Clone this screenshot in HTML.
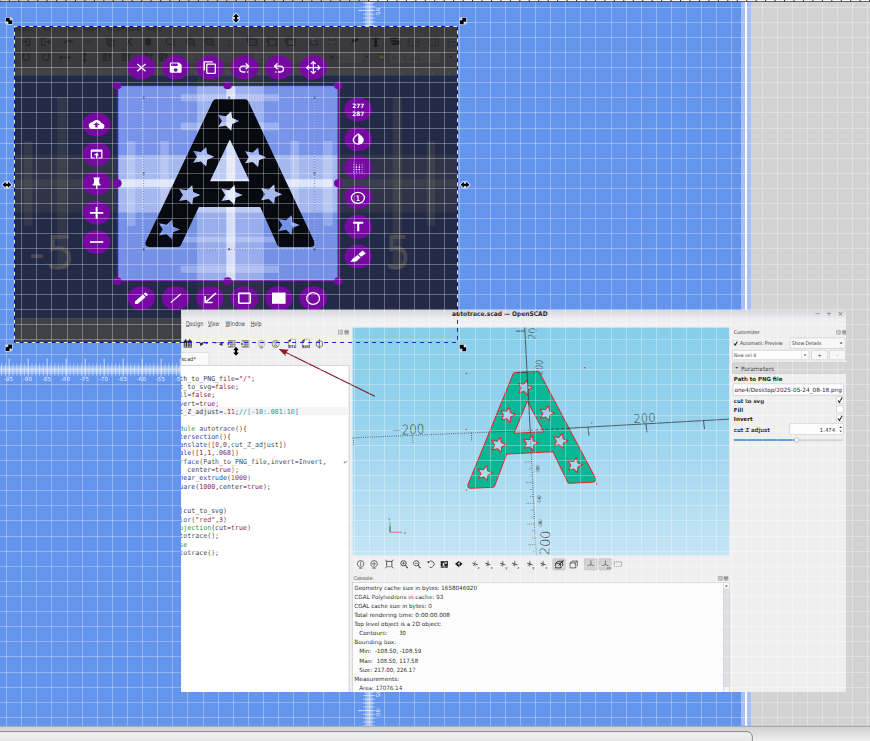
<!DOCTYPE html>
<html><head><meta charset="utf-8"><title>screenshot</title>
<style>
html,body{margin:0;padding:0;background:#6495ed;overflow:hidden}
svg{display:block}
text{white-space:pre}
</style></head><body>
<svg width="870" height="741" viewBox="0 0 870 741">
<rect x="0.00" y="0.00" width="870.00" height="741.00" fill="#6495ed" />
<rect x="751.00" y="0.00" width="119.00" height="726.00" fill="#d3d3d3" />
<rect x="741.00" y="0.00" width="10.00" height="726.00" fill="#a6c0f5" />
<rect x="745.00" y="0.00" width="2.00" height="726.00" fill="#ffffff" />
<g id="rulers">
<rect x="0.00" y="365.60" width="741.00" height="8.70" fill="#fff" fill-opacity="0.32"/>
<rect x="0.00" y="367.80" width="741.00" height="4.20" fill="#fff" fill-opacity="0.25"/>
<line x1="-2.20" y1="363.40" x2="-2.20" y2="376.00" stroke="#fff" stroke-width="0.8" stroke-opacity="0.5"/>
<line x1="1.60" y1="363.40" x2="1.60" y2="376.00" stroke="#fff" stroke-width="0.8" stroke-opacity="0.5"/>
<line x1="5.40" y1="363.40" x2="5.40" y2="376.00" stroke="#fff" stroke-width="0.8" stroke-opacity="0.5"/>
<line x1="9.20" y1="358.60" x2="9.20" y2="376.60" stroke="#fff" stroke-width="0.9" stroke-opacity="0.75"/>
<text x="8.40" y="381.40" font-size="5.6" fill="#fff" font-family="DejaVu Sans, sans-serif" text-anchor="middle" font-weight="normal" fill-opacity="0.85">-95</text>
<line x1="13.00" y1="363.40" x2="13.00" y2="376.00" stroke="#fff" stroke-width="0.8" stroke-opacity="0.5"/>
<line x1="16.80" y1="363.40" x2="16.80" y2="376.00" stroke="#fff" stroke-width="0.8" stroke-opacity="0.5"/>
<line x1="20.60" y1="363.40" x2="20.60" y2="376.00" stroke="#fff" stroke-width="0.8" stroke-opacity="0.5"/>
<line x1="24.40" y1="363.40" x2="24.40" y2="376.00" stroke="#fff" stroke-width="0.8" stroke-opacity="0.5"/>
<line x1="28.20" y1="358.60" x2="28.20" y2="376.60" stroke="#fff" stroke-width="0.9" stroke-opacity="0.75"/>
<text x="27.40" y="381.40" font-size="5.6" fill="#fff" font-family="DejaVu Sans, sans-serif" text-anchor="middle" font-weight="normal" fill-opacity="0.85">-90</text>
<line x1="32.00" y1="363.40" x2="32.00" y2="376.00" stroke="#fff" stroke-width="0.8" stroke-opacity="0.5"/>
<line x1="35.80" y1="363.40" x2="35.80" y2="376.00" stroke="#fff" stroke-width="0.8" stroke-opacity="0.5"/>
<line x1="39.60" y1="363.40" x2="39.60" y2="376.00" stroke="#fff" stroke-width="0.8" stroke-opacity="0.5"/>
<line x1="43.40" y1="363.40" x2="43.40" y2="376.00" stroke="#fff" stroke-width="0.8" stroke-opacity="0.5"/>
<line x1="47.20" y1="358.60" x2="47.20" y2="376.60" stroke="#fff" stroke-width="0.9" stroke-opacity="0.75"/>
<text x="46.40" y="381.40" font-size="5.6" fill="#fff" font-family="DejaVu Sans, sans-serif" text-anchor="middle" font-weight="normal" fill-opacity="0.85">-85</text>
<line x1="51.00" y1="363.40" x2="51.00" y2="376.00" stroke="#fff" stroke-width="0.8" stroke-opacity="0.5"/>
<line x1="54.80" y1="363.40" x2="54.80" y2="376.00" stroke="#fff" stroke-width="0.8" stroke-opacity="0.5"/>
<line x1="58.60" y1="363.40" x2="58.60" y2="376.00" stroke="#fff" stroke-width="0.8" stroke-opacity="0.5"/>
<line x1="62.40" y1="363.40" x2="62.40" y2="376.00" stroke="#fff" stroke-width="0.8" stroke-opacity="0.5"/>
<line x1="66.20" y1="358.60" x2="66.20" y2="376.60" stroke="#fff" stroke-width="0.9" stroke-opacity="0.75"/>
<text x="65.40" y="381.40" font-size="5.6" fill="#fff" font-family="DejaVu Sans, sans-serif" text-anchor="middle" font-weight="normal" fill-opacity="0.85">-80</text>
<line x1="70.00" y1="363.40" x2="70.00" y2="376.00" stroke="#fff" stroke-width="0.8" stroke-opacity="0.5"/>
<line x1="73.80" y1="363.40" x2="73.80" y2="376.00" stroke="#fff" stroke-width="0.8" stroke-opacity="0.5"/>
<line x1="77.60" y1="363.40" x2="77.60" y2="376.00" stroke="#fff" stroke-width="0.8" stroke-opacity="0.5"/>
<line x1="81.40" y1="363.40" x2="81.40" y2="376.00" stroke="#fff" stroke-width="0.8" stroke-opacity="0.5"/>
<line x1="85.20" y1="358.60" x2="85.20" y2="376.60" stroke="#fff" stroke-width="0.9" stroke-opacity="0.75"/>
<text x="84.40" y="381.40" font-size="5.6" fill="#fff" font-family="DejaVu Sans, sans-serif" text-anchor="middle" font-weight="normal" fill-opacity="0.85">-75</text>
<line x1="89.00" y1="363.40" x2="89.00" y2="376.00" stroke="#fff" stroke-width="0.8" stroke-opacity="0.5"/>
<line x1="92.80" y1="363.40" x2="92.80" y2="376.00" stroke="#fff" stroke-width="0.8" stroke-opacity="0.5"/>
<line x1="96.60" y1="363.40" x2="96.60" y2="376.00" stroke="#fff" stroke-width="0.8" stroke-opacity="0.5"/>
<line x1="100.40" y1="363.40" x2="100.40" y2="376.00" stroke="#fff" stroke-width="0.8" stroke-opacity="0.5"/>
<line x1="104.20" y1="358.60" x2="104.20" y2="376.60" stroke="#fff" stroke-width="0.9" stroke-opacity="0.75"/>
<text x="103.40" y="381.40" font-size="5.6" fill="#fff" font-family="DejaVu Sans, sans-serif" text-anchor="middle" font-weight="normal" fill-opacity="0.85">-70</text>
<line x1="108.00" y1="363.40" x2="108.00" y2="376.00" stroke="#fff" stroke-width="0.8" stroke-opacity="0.5"/>
<line x1="111.80" y1="363.40" x2="111.80" y2="376.00" stroke="#fff" stroke-width="0.8" stroke-opacity="0.5"/>
<line x1="115.60" y1="363.40" x2="115.60" y2="376.00" stroke="#fff" stroke-width="0.8" stroke-opacity="0.5"/>
<line x1="119.40" y1="363.40" x2="119.40" y2="376.00" stroke="#fff" stroke-width="0.8" stroke-opacity="0.5"/>
<line x1="123.20" y1="358.60" x2="123.20" y2="376.60" stroke="#fff" stroke-width="0.9" stroke-opacity="0.75"/>
<text x="122.40" y="381.40" font-size="5.6" fill="#fff" font-family="DejaVu Sans, sans-serif" text-anchor="middle" font-weight="normal" fill-opacity="0.85">-65</text>
<line x1="127.00" y1="363.40" x2="127.00" y2="376.00" stroke="#fff" stroke-width="0.8" stroke-opacity="0.5"/>
<line x1="130.80" y1="363.40" x2="130.80" y2="376.00" stroke="#fff" stroke-width="0.8" stroke-opacity="0.5"/>
<line x1="134.60" y1="363.40" x2="134.60" y2="376.00" stroke="#fff" stroke-width="0.8" stroke-opacity="0.5"/>
<line x1="138.40" y1="363.40" x2="138.40" y2="376.00" stroke="#fff" stroke-width="0.8" stroke-opacity="0.5"/>
<line x1="142.20" y1="358.60" x2="142.20" y2="376.60" stroke="#fff" stroke-width="0.9" stroke-opacity="0.75"/>
<text x="141.40" y="381.40" font-size="5.6" fill="#fff" font-family="DejaVu Sans, sans-serif" text-anchor="middle" font-weight="normal" fill-opacity="0.85">-60</text>
<line x1="146.00" y1="363.40" x2="146.00" y2="376.00" stroke="#fff" stroke-width="0.8" stroke-opacity="0.5"/>
<line x1="149.80" y1="363.40" x2="149.80" y2="376.00" stroke="#fff" stroke-width="0.8" stroke-opacity="0.5"/>
<line x1="153.60" y1="363.40" x2="153.60" y2="376.00" stroke="#fff" stroke-width="0.8" stroke-opacity="0.5"/>
<line x1="157.40" y1="363.40" x2="157.40" y2="376.00" stroke="#fff" stroke-width="0.8" stroke-opacity="0.5"/>
<line x1="161.20" y1="358.60" x2="161.20" y2="376.60" stroke="#fff" stroke-width="0.9" stroke-opacity="0.75"/>
<text x="160.40" y="381.40" font-size="5.6" fill="#fff" font-family="DejaVu Sans, sans-serif" text-anchor="middle" font-weight="normal" fill-opacity="0.85">-55</text>
<line x1="165.00" y1="363.40" x2="165.00" y2="376.00" stroke="#fff" stroke-width="0.8" stroke-opacity="0.5"/>
<line x1="168.80" y1="363.40" x2="168.80" y2="376.00" stroke="#fff" stroke-width="0.8" stroke-opacity="0.5"/>
<line x1="172.60" y1="363.40" x2="172.60" y2="376.00" stroke="#fff" stroke-width="0.8" stroke-opacity="0.5"/>
<line x1="176.40" y1="363.40" x2="176.40" y2="376.00" stroke="#fff" stroke-width="0.8" stroke-opacity="0.5"/>
<line x1="180.20" y1="358.60" x2="180.20" y2="376.60" stroke="#fff" stroke-width="0.9" stroke-opacity="0.75"/>
<text x="179.40" y="381.40" font-size="5.6" fill="#fff" font-family="DejaVu Sans, sans-serif" text-anchor="middle" font-weight="normal" fill-opacity="0.85">-50</text>
<line x1="184.00" y1="363.40" x2="184.00" y2="376.00" stroke="#fff" stroke-width="0.8" stroke-opacity="0.5"/>
<rect x="365.00" y="0.00" width="7.80" height="726.00" fill="#fff" fill-opacity="0.28"/>
<rect x="367.00" y="0.00" width="4.00" height="726.00" fill="#fff" fill-opacity="0.2"/>
<line x1="358.00" y1="729.58" x2="375.20" y2="729.58" stroke="#fff" stroke-width="0.9" stroke-opacity="0.75"/>
<text transform="translate(376.3,730.58) rotate(90)" font-size="5.6" fill="#fff" fill-opacity="0.85" text-anchor="middle" font-family="DejaVu Sans, sans-serif">-95</text>
<line x1="363.00" y1="725.79" x2="375.00" y2="725.79" stroke="#fff" stroke-width="0.8" stroke-opacity="0.6"/>
<line x1="363.00" y1="722.00" x2="375.00" y2="722.00" stroke="#fff" stroke-width="0.8" stroke-opacity="0.6"/>
<line x1="363.00" y1="718.22" x2="375.00" y2="718.22" stroke="#fff" stroke-width="0.8" stroke-opacity="0.6"/>
<line x1="363.00" y1="714.43" x2="375.00" y2="714.43" stroke="#fff" stroke-width="0.8" stroke-opacity="0.6"/>
<line x1="358.00" y1="710.65" x2="375.20" y2="710.65" stroke="#fff" stroke-width="0.9" stroke-opacity="0.75"/>
<text transform="translate(376.3,711.65) rotate(90)" font-size="5.6" fill="#fff" fill-opacity="0.85" text-anchor="middle" font-family="DejaVu Sans, sans-serif">-90</text>
<line x1="363.00" y1="706.87" x2="375.00" y2="706.87" stroke="#fff" stroke-width="0.8" stroke-opacity="0.6"/>
<line x1="363.00" y1="703.08" x2="375.00" y2="703.08" stroke="#fff" stroke-width="0.8" stroke-opacity="0.6"/>
<line x1="363.00" y1="699.30" x2="375.00" y2="699.30" stroke="#fff" stroke-width="0.8" stroke-opacity="0.6"/>
<line x1="363.00" y1="695.51" x2="375.00" y2="695.51" stroke="#fff" stroke-width="0.8" stroke-opacity="0.6"/>
<line x1="358.00" y1="691.73" x2="375.20" y2="691.73" stroke="#fff" stroke-width="0.9" stroke-opacity="0.75"/>
<text transform="translate(376.3,692.73) rotate(90)" font-size="5.6" fill="#fff" fill-opacity="0.85" text-anchor="middle" font-family="DejaVu Sans, sans-serif">-85</text>
<line x1="358.00" y1="29.35" x2="375.20" y2="29.35" stroke="#fff" stroke-width="0.9" stroke-opacity="0.75"/>
<text transform="translate(376.3,30.35) rotate(90)" font-size="5.6" fill="#fff" fill-opacity="0.85" text-anchor="middle" font-family="DejaVu Sans, sans-serif">90</text>
<line x1="363.00" y1="25.56" x2="375.00" y2="25.56" stroke="#fff" stroke-width="0.8" stroke-opacity="0.6"/>
<line x1="363.00" y1="21.78" x2="375.00" y2="21.78" stroke="#fff" stroke-width="0.8" stroke-opacity="0.6"/>
<line x1="363.00" y1="18.00" x2="375.00" y2="18.00" stroke="#fff" stroke-width="0.8" stroke-opacity="0.6"/>
<line x1="363.00" y1="14.21" x2="375.00" y2="14.21" stroke="#fff" stroke-width="0.8" stroke-opacity="0.6"/>
<line x1="358.00" y1="10.43" x2="375.20" y2="10.43" stroke="#fff" stroke-width="0.9" stroke-opacity="0.75"/>
<text transform="translate(376.3,11.43) rotate(90)" font-size="5.6" fill="#fff" fill-opacity="0.85" text-anchor="middle" font-family="DejaVu Sans, sans-serif">95</text>
<line x1="363.00" y1="6.64" x2="375.00" y2="6.64" stroke="#fff" stroke-width="0.8" stroke-opacity="0.6"/>
<line x1="363.00" y1="2.85" x2="375.00" y2="2.85" stroke="#fff" stroke-width="0.8" stroke-opacity="0.6"/>
<line x1="363.00" y1="-0.93" x2="375.00" y2="-0.93" stroke="#fff" stroke-width="0.8" stroke-opacity="0.6"/>
</g>
<clipPath id="cpDark"><rect x="15" y="27" width="442" height="315.5"/></clipPath>
<clipPath id="cpNavy"><rect x="15" y="75.2" width="442" height="242.8"/></clipPath>
<g id="dark" clip-path="url(#cpDark)">
<rect x="15.00" y="27.00" width="442.00" height="40.00" fill="#3a3a3e" />
<rect x="15.00" y="66.80" width="442.00" height="8.40" fill="#444448" />
<rect x="15.00" y="75.20" width="442.00" height="243.00" fill="#232a47" />
<rect x="15.00" y="318.00" width="442.00" height="25.00" fill="#404146" />
<rect x="15.00" y="318.00" width="442.00" height="0.80" fill="#4a4b50" />
<g opacity="0.92">
<text x="16.50" y="30.70" font-size="7.2" fill="#232327" font-family="DejaVu Sans, sans-serif" text-anchor="start" font-weight="normal" textLength="15.50" lengthAdjust="spacingAndGlyphs" >Object</text>
<text x="43.00" y="30.70" font-size="7.2" fill="#232327" font-family="DejaVu Sans, sans-serif" text-anchor="start" font-weight="normal" textLength="8.50" lengthAdjust="spacingAndGlyphs" >Path</text>
<text x="65.00" y="30.70" font-size="7.2" fill="#232327" font-family="DejaVu Sans, sans-serif" text-anchor="start" font-weight="normal" textLength="11.50" lengthAdjust="spacingAndGlyphs" >Text</text>
<text x="83.00" y="30.70" font-size="7.2" fill="#232327" font-family="DejaVu Sans, sans-serif" text-anchor="start" font-weight="normal" textLength="17.70" lengthAdjust="spacingAndGlyphs" >Filters</text>
<text x="106.50" y="30.70" font-size="7.2" fill="#232327" font-family="DejaVu Sans, sans-serif" text-anchor="start" font-weight="normal" textLength="33.50" lengthAdjust="spacingAndGlyphs" >Extensions</text>
<text x="147.00" y="30.70" font-size="7.2" fill="#232327" font-family="DejaVu Sans, sans-serif" text-anchor="start" font-weight="normal" textLength="15.00" lengthAdjust="spacingAndGlyphs" >Help</text>
<path d="M25.5,38.199999999999996 h4.2 v7.2 h-4.2 M22.0,41.8 h5 m-1.8,-1.8 l1.8,1.8 l-1.8,1.8" fill="none" stroke="#232327" stroke-width="1.1"/>
<path d="M46.2,38.199999999999996 h-4.6 v7.2 h4.6 M44.2,41.8 h6 m-1.8,-1.8 l1.8,1.8 l-1.8,1.8" fill="none" stroke="#232327" stroke-width="1.1"/>
<path d="M64.60000000000001,43.0 q3.4,-4.4 8,-0.6" fill="none" stroke="#232327" stroke-width="1.7"/>
<path d="M90.89999999999999,40.199999999999996 q-3.4,3.4 -7,0" fill="none" stroke="#303034" stroke-width="1.2"/>
<path d="M107.0,38.199999999999996 h5 v6 h-5z M109.2,40.199999999999996 h4.6 v6 h-4.6z" fill="none" stroke="#232327" stroke-width="1.1"/>
<path d="M126.4,38.0 l5.2,7.6 M131.6,38.0 l-5.2,7.6" fill="none" stroke="#232327" stroke-width="1.1"/>
<rect x="145.2" y="38.599999999999994" width="6" height="7" rx="0.8" fill="#232327"/><rect x="146.79999999999998" y="37.4" width="2.8" height="1.8" fill="#232327"/>
<ellipse cx="170.1" cy="41.199999999999996" rx="4" ry="3.4" fill="none" stroke="#232327" stroke-width="1.1"/><path d="M173.1,43.8 l2.4,2.2" fill="none" stroke="#232327" stroke-width="1.1"/>
<ellipse cx="190.1" cy="41.199999999999996" rx="4" ry="3.4" fill="none" stroke="#232327" stroke-width="1.1"/><rect x="188.29999999999998" y="39.4" width="3.8" height="3.4" fill="#34343a" stroke="#232327" stroke-width="0.6"/><path d="M193.1,43.8 l2.4,2.2" fill="none" stroke="#232327" stroke-width="1.1"/>
<ellipse cx="209.20000000000002" cy="41.199999999999996" rx="4" ry="3.4" fill="none" stroke="#232327" stroke-width="1.1"/><rect x="207.4" y="39.4" width="3.8" height="3.4" fill="#34343a" stroke="#232327" stroke-width="0.6"/><path d="M212.20000000000002,43.8 l2.4,2.2" fill="none" stroke="#232327" stroke-width="1.1"/>
<path d="M229,37.4 v8.6 M227.5,46.0 h7" fill="none" stroke="#232327" stroke-width="0.8" stroke-dasharray="1.4 1"/>
<rect x="248.70000000000002" y="38.8" width="7.6" height="6.6" fill="#34353d" stroke="#232327" stroke-width="1"/><path d="M247.3,42.8 v-5.6 h6" fill="none" stroke="#232327" stroke-width="1.1"/>
<rect x="268.7" y="38.8" width="7.6" height="6.6" fill="none" stroke="#232327" stroke-width="1"/><rect x="270.7" y="41.4" width="3.6" height="2.6" fill="#4a4430"/><path d="M267.3,42.8 v-5.6 h6" fill="none" stroke="#232327" stroke-width="1.1"/>
<rect x="287.09999999999997" y="38.8" width="7.6" height="6.6" fill="none" stroke="#232327" stroke-width="1"/><rect x="289.09999999999997" y="41.4" width="3.6" height="2.6" fill="#4a4430"/><path d="M285.7,42.8 v-5.6 h6" fill="none" stroke="#232327" stroke-width="1.1"/>
<path d="M309.59999999999997,44.8 l2,-5 h4 l2,5z" fill="#3a3d48" stroke="#232327" stroke-width="0.9"/><rect x="311.2" y="37.599999999999994" width="3.6" height="2.6" fill="#454a58"/>
<path d="M328.5,38.199999999999996 l8,7.2 M336.5,38.199999999999996 l-8,7.2" fill="none" stroke="#232327" stroke-width="0.9"/><rect x="329.9" y="41.199999999999996" width="5.2" height="2.2" fill="#4a4636"/>
<path d="M350.20000000000005,45.599999999999994 l2.6,-6.8 l1.8,0.8z" fill="#232327"/><path d="M353.0,40.4 l5.2,-3 l1.2,1.6 l-5,3.4z" fill="#16161a"/><circle cx="359.0" cy="38.4" r="0.9" fill="#5a4a20"/>
<path d="M371.9,37.4 h7.6 v2 h-0.6 l-0.6,-1 h-1.4 v7 l1.4,0.6 v0.6 h-5.2 v-0.6 l1.4,-0.6 v-7 h-1.4 l-0.6,1 h-0.6z" fill="#141417"/>
<path d="M390.5,38.4 l7.4,-0.6 M391.70000000000005,41.199999999999996 l7.6,0.2 M392.5,44.199999999999996 l7,-0.8" fill="none" stroke="#131316" stroke-width="1.7" stroke-linecap="round"/>
<rect x="408.4" y="37.8" width="10.4" height="8" rx="1" fill="none" stroke="#2a2a2e" stroke-width="1"/><path d="M411.79999999999995,40.0 l-2,1.8 l2,1.8 M415.2,40.0 l2,1.8 l-2,1.8" fill="none" stroke="#2c2c31" stroke-width="0.9"/>
<rect x="429.09999999999997" y="37.8" width="9.4" height="8" rx="1" fill="none" stroke="#2a2a2e" stroke-width="1"/><path d="M435.3,37.8 v8" stroke="#2a2a2e" stroke-width="0.9"/>
<path d="M448.5,39.199999999999996 h9 v2.2 h-9z M448.5,42.8 h9 v2.4 h-9z" fill="#40454f" stroke="#2a2a2e" stroke-width="0.7"/>
<path d="M23.9,54.9 A3.3,3.1 0 1 0 26.9,54.099999999999994" fill="none" stroke="#232327" stroke-width="1.1"/><path d="M22.3,55.9 l0.4,-3 l2.6,1.8z" fill="#232327"/>
<path d="M48.300000000000004,54.9 A3.3,3.1 0 1 1 45.300000000000004,54.099999999999994" fill="none" stroke="#232327" stroke-width="1.1"/><path d="M49.900000000000006,55.9 l-0.4,-3 l-2.6,1.8z" fill="#232327"/>
<path d="M59.8,57.3 h10 M61.8,55.4 l-2.2,1.9 l2.2,1.9 M67.8,55.4 l2.2,1.9 l-2.2,1.9" fill="none" stroke="#232327" stroke-width="1.1"/>
<path d="M84.8,53.099999999999994 v8.4 M83.0,54.9 l1.8,-2 l1.8,2 M83.0,59.699999999999996 l1.8,2 l1.8,-2" fill="none" stroke="#232327" stroke-width="1.1"/>
<path d="M102.5,53.699999999999996 h5 M102.5,55.9 h5 M102.5,58.099999999999994 h5 M102.5,60.3 h5" fill="none" stroke="#232327" stroke-width="1.3"/><path d="M109.7,60.9 v-7 m-1.4,1.6 l1.4,-1.6 l1.4,1.6" fill="none" stroke="#232327" stroke-width="1.1"/>
<path d="M121.7,53.699999999999996 h5 M121.7,55.9 h5 M121.7,58.099999999999994 h5 M121.7,60.3 h5" fill="none" stroke="#232327" stroke-width="1.3"/><path d="M128.9,60.9 v-7 m-1.4,1.6 l1.4,-1.6 l1.4,1.6" fill="none" stroke="#232327" stroke-width="1.1"/>
<path d="M144,53.699999999999996 h5 M144,55.9 h5 M144,58.099999999999994 h5 M144,60.3 h5" fill="none" stroke="#232327" stroke-width="1.3"/><path d="M151.2,60.9 v-7 m-1.4,1.6 l1.4,-1.6 l1.4,1.6" fill="none" stroke="#232327" stroke-width="1.1"/>
<path d="M159,53.699999999999996 h5 M159,55.9 h5 M159,58.099999999999994 h5 M159,60.3 h5" fill="none" stroke="#232327" stroke-width="1.3"/><path d="M166.2,60.9 v-7 m-1.4,1.6 l1.4,-1.6 l1.4,1.6" fill="none" stroke="#232327" stroke-width="1.1"/>
<rect x="186.00" y="51.60" width="46.00" height="11.40" fill="#424246" />
<rect x="254.00" y="51.60" width="68.00" height="11.40" fill="#424246" />
<rect x="337.00" y="51.60" width="25.00" height="11.40" fill="#424246" />
<rect x="390.00" y="51.60" width="50.00" height="11.40" fill="#424246" />
<text x="194.00" y="60.20" font-size="6.2" fill="#2b2b30" font-family="DejaVu Sans, sans-serif" text-anchor="start" font-weight="normal" >2.5</text>
<text x="261.00" y="60.20" font-size="6.2" fill="#2b2b30" font-family="DejaVu Sans, sans-serif" text-anchor="start" font-weight="normal" >2.219</text>
<text x="329.00" y="60.20" font-size="6.2" fill="#2b2b30" font-family="DejaVu Sans, sans-serif" text-anchor="start" font-weight="normal" >004</text>
<text x="392.00" y="60.20" font-size="6.2" fill="#2b2b30" font-family="DejaVu Sans, sans-serif" text-anchor="start" font-weight="normal" >H:</text>
<text x="403.00" y="60.20" font-size="6.2" fill="#2b2b30" font-family="DejaVu Sans, sans-serif" text-anchor="start" font-weight="normal" >5.182</text>
<circle cx="236" cy="56.6" r="0.9" fill="#6a2424"/>
<circle cx="326" cy="56.6" r="0.9" fill="#6a2424"/>
<circle cx="360.2" cy="56.6" r="0.9" fill="#6a2424"/>
<circle cx="444.7" cy="56.6" r="0.9" fill="#6a2424"/>
<path d="M242,55.2 l1.2,1.4 l-1.2,1.4 l-1.2,-1.4z" fill="#1c1c20"/>
<path d="M332,55.2 l1.2,1.4 l-1.2,1.4 l-1.2,-1.4z" fill="#1c1c20"/>
<path d="M366.5,55.2 l1.2,1.4 l-1.2,1.4 l-1.2,-1.4z" fill="#1c1c20"/>
<path d="M450.5,55.2 l1.2,1.4 l-1.2,1.4 l-1.2,-1.4z" fill="#1c1c20"/>
<rect x="378.5" y="54.6" width="5.6" height="4.6" fill="#5a5230" stroke="#26262a" stroke-width="0.7" transform="rotate(12 381 57)"/>
<line x1="22.00" y1="70.50" x2="22.00" y2="75.00" stroke="#5a5a5e" stroke-width="0.7" />
<line x1="37.80" y1="70.50" x2="37.80" y2="75.00" stroke="#5a5a5e" stroke-width="0.7" />
<line x1="53.60" y1="70.50" x2="53.60" y2="75.00" stroke="#5a5a5e" stroke-width="0.7" />
<line x1="69.40" y1="70.50" x2="69.40" y2="75.00" stroke="#5a5a5e" stroke-width="0.7" />
<line x1="85.20" y1="70.50" x2="85.20" y2="75.00" stroke="#5a5a5e" stroke-width="0.7" />
<line x1="101.00" y1="70.50" x2="101.00" y2="75.00" stroke="#5a5a5e" stroke-width="0.7" />
<line x1="116.80" y1="70.50" x2="116.80" y2="75.00" stroke="#5a5a5e" stroke-width="0.7" />
<line x1="132.60" y1="70.50" x2="132.60" y2="75.00" stroke="#5a5a5e" stroke-width="0.7" />
<line x1="148.40" y1="70.50" x2="148.40" y2="75.00" stroke="#5a5a5e" stroke-width="0.7" />
<line x1="164.20" y1="70.50" x2="164.20" y2="75.00" stroke="#5a5a5e" stroke-width="0.7" />
<line x1="180.00" y1="70.50" x2="180.00" y2="75.00" stroke="#5a5a5e" stroke-width="0.7" />
<line x1="195.80" y1="70.50" x2="195.80" y2="75.00" stroke="#5a5a5e" stroke-width="0.7" />
<line x1="211.60" y1="70.50" x2="211.60" y2="75.00" stroke="#5a5a5e" stroke-width="0.7" />
<line x1="227.40" y1="70.50" x2="227.40" y2="75.00" stroke="#5a5a5e" stroke-width="0.7" />
<line x1="243.20" y1="70.50" x2="243.20" y2="75.00" stroke="#5a5a5e" stroke-width="0.7" />
<line x1="259.00" y1="70.50" x2="259.00" y2="75.00" stroke="#5a5a5e" stroke-width="0.7" />
<line x1="274.80" y1="70.50" x2="274.80" y2="75.00" stroke="#5a5a5e" stroke-width="0.7" />
<line x1="290.60" y1="70.50" x2="290.60" y2="75.00" stroke="#5a5a5e" stroke-width="0.7" />
<line x1="306.40" y1="70.50" x2="306.40" y2="75.00" stroke="#5a5a5e" stroke-width="0.7" />
<line x1="322.20" y1="70.50" x2="322.20" y2="75.00" stroke="#5a5a5e" stroke-width="0.7" />
<line x1="338.00" y1="70.50" x2="338.00" y2="75.00" stroke="#5a5a5e" stroke-width="0.7" />
<line x1="353.80" y1="70.50" x2="353.80" y2="75.00" stroke="#5a5a5e" stroke-width="0.7" />
<line x1="369.60" y1="70.50" x2="369.60" y2="75.00" stroke="#5a5a5e" stroke-width="0.7" />
<line x1="385.40" y1="70.50" x2="385.40" y2="75.00" stroke="#5a5a5e" stroke-width="0.7" />
<line x1="401.20" y1="70.50" x2="401.20" y2="75.00" stroke="#5a5a5e" stroke-width="0.7" />
<line x1="417.00" y1="70.50" x2="417.00" y2="75.00" stroke="#5a5a5e" stroke-width="0.7" />
<line x1="432.80" y1="70.50" x2="432.80" y2="75.00" stroke="#5a5a5e" stroke-width="0.7" />
<line x1="448.60" y1="70.50" x2="448.60" y2="75.00" stroke="#5a5a5e" stroke-width="0.7" />
<line x1="464.40" y1="70.50" x2="464.40" y2="75.00" stroke="#5a5a5e" stroke-width="0.7" />
<line x1="480.20" y1="70.50" x2="480.20" y2="75.00" stroke="#5a5a5e" stroke-width="0.7" />
</g>
<g clip-path="url(#cpNavy)">
<rect x="15.00" y="155.00" width="442.00" height="57.50" fill="#978557" fill-opacity="0.12"/>
<rect x="15.00" y="179.20" width="442.00" height="8.00" fill="#a8a080" fill-opacity="0.10"/>
<rect x="197.00" y="75.00" width="66.00" height="243.00" fill="#978557" fill-opacity="0.08"/>
<rect x="23.80" y="141.00" width="8.50" height="85.00" fill="#9a8d67" fill-opacity="0.15"/>
<rect x="57.10" y="97.30" width="9.20" height="172.00" fill="#9a8d67" fill-opacity="0.15"/>
<rect x="392.70" y="97.30" width="9.20" height="172.00" fill="#9a8d67" fill-opacity="0.15"/>
<rect x="426.70" y="141.00" width="8.50" height="85.00" fill="#9a8d67" fill-opacity="0.15"/>
</g>
<text x="28.60" y="268.50" font-size="47" fill="#6b6660" font-family="DejaVu Sans, sans-serif" text-anchor="start" font-weight="normal" textLength="46.50" lengthAdjust="spacingAndGlyphs" fill-opacity="0.5">-5</text>
<text x="385.00" y="268.50" font-size="47" fill="#6b6660" font-family="DejaVu Sans, sans-serif" text-anchor="start" font-weight="normal" textLength="26.00" lengthAdjust="spacingAndGlyphs" fill-opacity="0.5">5</text>
</g>
<clipPath id="cpPanel"><rect x="117.70" y="85.60" width="220.40" height="195.30"/></clipPath>
<g id="panel">
<rect x="117.70" y="85.60" width="220.40" height="195.30" fill="#7894e8" />
<g clip-path="url(#cpPanel)">
<rect x="197.00" y="85.60" width="66.00" height="195.30" fill="#fff" fill-opacity="0.28"/>
<rect x="117.70" y="155.10" width="220.40" height="57.50" fill="#fff" fill-opacity="0.33"/>
<rect x="117.70" y="212.60" width="220.40" height="68.30" fill="#2040c0" fill-opacity="0.03"/>
<rect x="126.90" y="141.00" width="8.50" height="85.00" fill="#fff" fill-opacity="0.22"/>
<rect x="160.20" y="141.00" width="8.50" height="85.00" fill="#fff" fill-opacity="0.22"/>
<rect x="290.50" y="141.00" width="8.50" height="85.00" fill="#fff" fill-opacity="0.22"/>
<rect x="324.00" y="141.00" width="8.50" height="85.00" fill="#fff" fill-opacity="0.22"/>
<rect x="180.70" y="94.20" width="98.00" height="7.10" fill="#fff" fill-opacity="0.25"/>
<rect x="180.70" y="122.50" width="98.00" height="7.80" fill="#fff" fill-opacity="0.25"/>
<rect x="180.70" y="236.70" width="98.00" height="5.60" fill="#fff" fill-opacity="0.25"/>
<rect x="180.70" y="265.70" width="98.00" height="7.10" fill="#fff" fill-opacity="0.25"/>
<rect x="120.50" y="179.20" width="212.00" height="8.00" fill="#fff" fill-opacity="0.62"/>
<rect x="226.30" y="85.60" width="9.00" height="195.30" fill="#fff" fill-opacity="0.60"/>
</g>
<path d="M212.75,101.29Q213.70,99.30 215.91,99.30L245.08,99.30Q247.30,99.30 248.25,101.31L313.78,240.58Q316.80,247.00 309.71,247.00L280.14,247.00Q278.20,247.00 277.40,245.23L260.36,207.35Q260.20,207.00 259.81,207.00L199.28,207.00Q198.90,207.00 198.74,207.34L180.81,245.28Q180.00,247.00 178.10,247.00L150.33,247.00Q143.20,247.00 146.27,240.56ZM229.35,140.35Q229.80,139.40 230.25,140.35L249.26,180.49Q249.60,181.20 248.81,181.20L210.79,181.20Q210.00,181.20 210.34,180.49ZM231.22,111.21L232.21,118.05L239.30,121.00L232.21,123.95L231.22,130.79L225.84,125.77L218.13,127.05L221.90,121.00L218.13,114.95L225.84,116.23ZM206.22,146.91L207.21,153.75L214.30,156.70L207.21,159.65L206.22,166.49L200.84,161.47L193.13,162.75L196.90,156.70L193.13,150.65L200.84,151.93ZM258.12,147.41L259.11,154.25L266.20,157.20L259.11,160.15L258.12,166.99L252.74,161.97L245.03,163.25L248.80,157.20L245.03,151.15L252.74,152.43ZM192.22,185.21L193.21,192.05L200.30,195.00L193.21,197.95L192.22,204.79L186.84,199.77L179.13,201.05L182.90,195.00L179.13,188.95L186.84,190.23ZM234.52,185.11L235.51,191.95L242.60,194.90L235.51,197.85L234.52,204.69L229.14,199.67L221.43,200.95L225.20,194.90L221.43,188.85L229.14,190.13ZM274.12,184.41L275.11,191.25L282.20,194.20L275.11,197.15L274.12,203.99L268.74,198.97L261.03,200.25L264.80,194.20L261.03,188.15L268.74,189.43ZM172.02,219.61L173.01,226.45L180.10,229.40L173.01,232.35L172.02,239.19L166.64,234.17L158.93,235.45L162.70,229.40L158.93,223.35L166.64,224.63ZM291.52,215.31L292.51,222.15L299.60,225.10L292.51,228.05L291.52,234.89L286.14,229.87L278.43,231.15L282.20,225.10L278.43,219.05L286.14,220.33Z" fill="#080a12" fill-rule="evenodd"/>
<rect x="143.6" y="97.6" width="171" height="151.6" fill="none" stroke="#fff" stroke-width="0.9" stroke-opacity="0.35"/>
<rect x="143.6" y="97.6" width="171" height="151.6" fill="none" stroke="#4454d8" stroke-width="0.9" stroke-dasharray="1 1.7" stroke-opacity="0.85"/>
<rect x="142.60" y="96.60" width="2.00" height="2.00" fill="#333" fill-opacity="0.8"/>
<rect x="228.10" y="96.60" width="2.00" height="2.00" fill="#333" fill-opacity="0.8"/>
<rect x="313.60" y="96.60" width="2.00" height="2.00" fill="#333" fill-opacity="0.8"/>
<rect x="142.60" y="172.40" width="2.00" height="2.00" fill="#333" fill-opacity="0.8"/>
<rect x="313.60" y="172.40" width="2.00" height="2.00" fill="#333" fill-opacity="0.8"/>
<rect x="142.60" y="248.20" width="2.00" height="2.00" fill="#333" fill-opacity="0.8"/>
<rect x="228.10" y="248.20" width="2.00" height="2.00" fill="#333" fill-opacity="0.8"/>
<rect x="313.60" y="248.20" width="2.00" height="2.00" fill="#333" fill-opacity="0.8"/>
<rect x="117.7" y="85.6" width="220.40" height="195.30" fill="none" stroke="#7609a2" stroke-width="1.1"/>
<ellipse cx="117.30" cy="85.30" rx="4.3" ry="3.9" fill="#7609a2"/>
<ellipse cx="117.30" cy="183.20" rx="4.3" ry="3.9" fill="#7609a2"/>
<ellipse cx="117.30" cy="281.10" rx="4.3" ry="3.9" fill="#7609a2"/>
<ellipse cx="227.60" cy="85.30" rx="4.3" ry="3.9" fill="#7609a2"/>
<ellipse cx="227.60" cy="281.10" rx="4.3" ry="3.9" fill="#7609a2"/>
<ellipse cx="338.30" cy="85.30" rx="4.3" ry="3.9" fill="#7609a2"/>
<ellipse cx="338.30" cy="183.20" rx="4.3" ry="3.9" fill="#7609a2"/>
<ellipse cx="338.30" cy="281.10" rx="4.3" ry="3.9" fill="#7609a2"/>
</g>
<g id="buttons">
<ellipse cx="141.40" cy="67.60" rx="13.8" ry="12.0" fill="#7609a2"/>
<path transform="translate(133.54,60.70) scale(0.655,0.575)" d="M19 6.41L17.59 5 12 10.59 6.41 5 5 6.41 10.59 12 5 17.59 6.41 19 12 13.41 17.59 19 19 17.59 13.41 12z" fill="#fff"/>
<ellipse cx="175.70" cy="67.60" rx="13.8" ry="12.0" fill="#7609a2"/>
<path transform="translate(167.84,60.70) scale(0.655,0.575)" d="M17 3H5c-1.11 0-2 .9-2 2v14c0 1.1.89 2 2 2h14c1.1 0 2-.9 2-2V7l-4-4zm-5 16c-1.66 0-3-1.34-3-3s1.34-3 3-3 3 1.34 3 3-1.34 3-3 3zm3-10H5V5h10v4z" fill="#fff"/>
<ellipse cx="210.10" cy="67.60" rx="13.8" ry="12.0" fill="#7609a2"/>
<path transform="translate(202.24,60.70) scale(0.655,0.575)" d="M16 1H4c-1.1 0-2 .9-2 2v14h2V3h12V1zm3 4H8c-1.1 0-2 .9-2 2v14c0 1.1.9 2 2 2h11c1.1 0 2-.9 2-2V7c0-1.1-.9-2-2-2zm0 16H8V7h11v14z" fill="#fff"/>
<ellipse cx="244.50" cy="67.60" rx="13.8" ry="12.0" fill="#7609a2"/>
<ellipse cx="278.80" cy="67.60" rx="13.8" ry="12.0" fill="#7609a2"/>
<ellipse cx="313.30" cy="67.60" rx="13.8" ry="12.0" fill="#7609a2"/>
<g transform="translate(313.30,67.60)" fill="none" stroke="#fff" stroke-width="1.15" stroke-linecap="round" stroke-linejoin="round"><path d="M-6.6,0 H6.6 M0,-5.7 V5.7"/><path d="M-4.6,-1.9 L-6.7,0 L-4.6,1.9 M4.6,-1.9 L6.7,0 L4.6,1.9 M-2.1,-3.9 L0,-5.8 L2.1,-3.9 M-2.1,3.9 L0,5.8 L2.1,3.9"/></g>
<g transform="translate(244.50,67.60) scale(1,1)" fill="none" stroke="#fff" stroke-width="1.3" stroke-linecap="round" stroke-linejoin="round"><path d="M3.6,-1.4 H-1.6 A3.1,2.9 0 0 0 -1.6,4.4 H0.4"/><path d="M1.6,-3.9 L4.2,-1.4 L1.6,1.1"/><path d="M3.0,4.4 h0.1" stroke-width="1.5"/></g>
<g transform="translate(278.80,67.60) scale(-1,1)" fill="none" stroke="#fff" stroke-width="1.3" stroke-linecap="round" stroke-linejoin="round"><path d="M3.6,-1.4 H-1.6 A3.1,2.9 0 0 0 -1.6,4.4 H0.4"/><path d="M1.6,-3.9 L4.2,-1.4 L1.6,1.1"/><path d="M3.0,4.4 h0.1" stroke-width="1.5"/></g>
<ellipse cx="96.60" cy="124.50" rx="13.8" ry="12.0" fill="#7609a2"/>
<path transform="translate(88.74,117.60) scale(0.655,0.575)" d="M19.35 10.04C18.67 6.59 15.64 4 12 4 9.11 4 6.6 5.64 5.35 8.04 2.34 8.36 0 10.91 0 14c0 3.31 2.69 6 6 6h13c2.76 0 5-2.24 5-5 0-2.64-2.05-4.78-4.65-4.96zM14 13v4h-4v-4H7l5-5 5 5h-3z" fill="#fff"/>
<ellipse cx="96.60" cy="154.00" rx="13.8" ry="12.0" fill="#7609a2"/>
<path transform="translate(88.74,147.10) scale(0.655,0.575)" d="M19 4H5c-1.11 0-2 .9-2 2v12c0 1.1.89 2 2 2h4v-2H5V8h14v10h-4v2h4c1.1 0 2-.9 2-2V6c0-1.1-.89-2-2-2zm-7 6l-4 4h3v6h2v-6h3l-4-4z" fill="#fff"/>
<ellipse cx="96.60" cy="183.20" rx="13.8" ry="12.0" fill="#7609a2"/>
<path transform="translate(88.74,176.30) scale(0.655,0.575)" d="M16,12V4H17V2H7V4H8V12L6,14V16H11.2V22H12.8V16H18V14L16,12Z" fill="#fff"/>
<ellipse cx="96.60" cy="212.80" rx="13.8" ry="12.0" fill="#7609a2"/>
<path transform="translate(85.20,202.80) scale(0.950,0.834)" d="M19 13h-6v6h-2v-6H5v-2h6V5h2v6h6v2z" fill="#fff"/>
<ellipse cx="96.60" cy="242.00" rx="13.8" ry="12.0" fill="#7609a2"/>
<path transform="translate(85.20,232.00) scale(0.950,0.834)" d="M19 13H5v-2h14v2z" fill="#fff"/>
<ellipse cx="358.20" cy="109.40" rx="13.8" ry="12.0" fill="#7609a2"/>
<text x="358.20" y="108.10" font-size="6.0" fill="#fff" font-family="DejaVu Sans, sans-serif" text-anchor="middle" font-weight="bold" textLength="12.00" lengthAdjust="spacingAndGlyphs" >277</text><text x="358.20" y="116.30" font-size="6.0" fill="#fff" font-family="DejaVu Sans, sans-serif" text-anchor="middle" font-weight="bold" textLength="12.00" lengthAdjust="spacingAndGlyphs" >287</text>
<ellipse cx="358.20" cy="138.90" rx="13.8" ry="12.0" fill="#7609a2"/>
<path transform="translate(349.79,131.52) scale(0.701,0.615)" d="M17.66 7.93L12 2.27 6.34 7.93c-3.12 3.12-3.12 8.19 0 11.31C7.9 20.8 9.95 21.58 12 21.58c2.05 0 4.1-.78 5.66-2.34 3.12-3.12 3.12-8.19 0-11.31zM12 19.59c-1.6 0-3.11-.62-4.24-1.76C6.62 16.69 6 15.19 6 13.59s.62-3.11 1.76-4.24L12 5.1v14.49z" fill="#fff"/>
<ellipse cx="358.20" cy="167.60" rx="13.8" ry="12.0" fill="#7609a2"/>
<ellipse cx="350.90" cy="162.30" rx="0.35" ry="0.32" fill="#fff" fill-opacity="0.5"/><ellipse cx="350.90" cy="164.70" rx="0.35" ry="0.32" fill="#fff" fill-opacity="0.5"/><ellipse cx="350.90" cy="167.10" rx="0.35" ry="0.32" fill="#fff" fill-opacity="0.5"/><ellipse cx="350.90" cy="169.50" rx="0.35" ry="0.32" fill="#fff" fill-opacity="0.5"/><ellipse cx="350.90" cy="171.90" rx="0.35" ry="0.32" fill="#fff" fill-opacity="0.5"/><ellipse cx="350.90" cy="174.30" rx="0.35" ry="0.32" fill="#fff" fill-opacity="0.5"/><ellipse cx="353.70" cy="162.30" rx="0.35" ry="0.32" fill="#fff" fill-opacity="0.5"/><ellipse cx="353.70" cy="164.70" rx="0.61" ry="0.55" fill="#fff" fill-opacity="0.85"/><ellipse cx="353.70" cy="167.10" rx="0.61" ry="0.55" fill="#fff" fill-opacity="0.85"/><ellipse cx="353.70" cy="169.50" rx="0.61" ry="0.55" fill="#fff" fill-opacity="0.85"/><ellipse cx="353.70" cy="171.90" rx="0.61" ry="0.55" fill="#fff" fill-opacity="0.85"/><ellipse cx="353.70" cy="174.30" rx="0.35" ry="0.32" fill="#fff" fill-opacity="0.5"/><ellipse cx="356.50" cy="162.30" rx="0.35" ry="0.32" fill="#fff" fill-opacity="0.5"/><ellipse cx="356.50" cy="164.70" rx="0.61" ry="0.55" fill="#fff" fill-opacity="0.85"/><ellipse cx="356.50" cy="167.10" rx="0.86" ry="0.78" fill="#fff" fill-opacity="1.0"/><ellipse cx="356.50" cy="169.50" rx="0.86" ry="0.78" fill="#fff" fill-opacity="1.0"/><ellipse cx="356.50" cy="171.90" rx="0.61" ry="0.55" fill="#fff" fill-opacity="0.85"/><ellipse cx="356.50" cy="174.30" rx="0.35" ry="0.32" fill="#fff" fill-opacity="0.5"/><ellipse cx="359.30" cy="162.30" rx="0.35" ry="0.32" fill="#fff" fill-opacity="0.5"/><ellipse cx="359.30" cy="164.70" rx="0.61" ry="0.55" fill="#fff" fill-opacity="0.85"/><ellipse cx="359.30" cy="167.10" rx="0.86" ry="0.78" fill="#fff" fill-opacity="1.0"/><ellipse cx="359.30" cy="169.50" rx="0.86" ry="0.78" fill="#fff" fill-opacity="1.0"/><ellipse cx="359.30" cy="171.90" rx="0.61" ry="0.55" fill="#fff" fill-opacity="0.85"/><ellipse cx="359.30" cy="174.30" rx="0.35" ry="0.32" fill="#fff" fill-opacity="0.5"/><ellipse cx="362.10" cy="162.30" rx="0.35" ry="0.32" fill="#fff" fill-opacity="0.5"/><ellipse cx="362.10" cy="164.70" rx="0.61" ry="0.55" fill="#fff" fill-opacity="0.85"/><ellipse cx="362.10" cy="167.10" rx="0.61" ry="0.55" fill="#fff" fill-opacity="0.85"/><ellipse cx="362.10" cy="169.50" rx="0.61" ry="0.55" fill="#fff" fill-opacity="0.85"/><ellipse cx="362.10" cy="171.90" rx="0.61" ry="0.55" fill="#fff" fill-opacity="0.85"/><ellipse cx="362.10" cy="174.30" rx="0.35" ry="0.32" fill="#fff" fill-opacity="0.5"/><ellipse cx="364.90" cy="162.30" rx="0.35" ry="0.32" fill="#fff" fill-opacity="0.5"/><ellipse cx="364.90" cy="164.70" rx="0.35" ry="0.32" fill="#fff" fill-opacity="0.5"/><ellipse cx="364.90" cy="167.10" rx="0.35" ry="0.32" fill="#fff" fill-opacity="0.5"/><ellipse cx="364.90" cy="169.50" rx="0.35" ry="0.32" fill="#fff" fill-opacity="0.5"/><ellipse cx="364.90" cy="171.90" rx="0.35" ry="0.32" fill="#fff" fill-opacity="0.5"/><ellipse cx="364.90" cy="174.30" rx="0.35" ry="0.32" fill="#fff" fill-opacity="0.5"/>
<ellipse cx="358.20" cy="197.00" rx="13.8" ry="12.0" fill="#7609a2"/>
<ellipse cx="357.90" cy="197.90" rx="6.5" ry="5.5" fill="none" stroke="#fff" stroke-width="1.3"/><text x="357.80" y="200.60" font-size="7.6" fill="#fff" font-family="DejaVu Sans, sans-serif" text-anchor="middle" font-weight="bold" textLength="3.80" lengthAdjust="spacingAndGlyphs" >1</text>
<ellipse cx="358.20" cy="226.80" rx="13.8" ry="12.0" fill="#7609a2"/>
<path transform="translate(349.55,219.21) scale(0.721,0.632)" d="M5 4v3h5.5v12h3V7H19V4z" fill="#fff"/>
<ellipse cx="358.20" cy="256.40" rx="13.8" ry="12.0" fill="#7609a2"/>
<g transform="translate(358.20,256.40)" fill="#fff"><path d="M4.5,-5.9 L7.6,-3.0 L3.1,0.4 L0,-2.1Z"/><path d="M-0.6,-1.4 L2.4,1.1 L-2.1,5.0 L-7.7,5.6 L-5.5,2.3Z"/></g>
<ellipse cx="141.40" cy="298.20" rx="13.8" ry="12.0" fill="#7609a2"/>
<path transform="translate(132.75,290.61) scale(0.721,0.632)" d="M3 17.25V21h3.75L17.81 9.94l-3.75-3.75L3 17.25zM20.71 7.04c.39-.39.39-1.02 0-1.41l-2.34-2.34c-.39-.39-1.02-.39-1.41 0l-1.83 1.83 3.75 3.75 1.83-1.83z" fill="#fff"/>
<ellipse cx="175.70" cy="298.20" rx="13.8" ry="12.0" fill="#7609a2"/>
<path transform="translate(167.45,290.95) scale(0.688,0.604)" d="M4.2 18.6L18.8 4.4l1.2 1.3L5.4 19.9z" fill="#fff"/>
<ellipse cx="210.10" cy="298.20" rx="13.8" ry="12.0" fill="#7609a2"/>
<path transform="translate(200.28,289.57) scale(0.819,0.719)" d="M20 5.41L18.59 4 7 15.59V9H5v10h10v-2H8.41z" fill="#fff"/>
<ellipse cx="244.50" cy="298.20" rx="13.8" ry="12.0" fill="#7609a2"/>
<path transform="translate(234.68,289.57) scale(0.819,0.719)" d="M18 4H6c-1.1 0-2 .9-2 2v12c0 1.1.9 2 2 2h12c1.1 0 2-.9 2-2V6c0-1.1-.9-2-2-2zm0 14H6V6h12v12z" fill="#fff"/>
<ellipse cx="278.80" cy="298.20" rx="13.8" ry="12.0" fill="#7609a2"/>
<path transform="translate(269.21,289.78) scale(0.799,0.701)" d="M3.5 4h17v16h-17z" fill="#fff"/>
<ellipse cx="313.30" cy="298.20" rx="13.8" ry="12.0" fill="#7609a2"/>
<ellipse cx="313.10" cy="298.4" rx="6.4" ry="5.9" fill="none" stroke="#fff" stroke-width="1.25"/>
</g>
<defs>
<linearGradient id="gTitle" x1="0" y1="0" x2="0" y2="1"><stop offset="0" stop-color="#d6d6db"/><stop offset="1" stop-color="#ebebee"/></linearGradient>
<linearGradient id="gSky" x1="0" y1="0" x2="0" y2="1"><stop offset="0" stop-color="#87ceeb"/><stop offset="0.35" stop-color="#93d1ec"/><stop offset="1" stop-color="#c4e4f5"/></linearGradient>
<clipPath id="cpWin"><rect x="181.10" y="309.70" width="664.90" height="382.30"/></clipPath>
<clipPath id="cpView"><rect x="352.6" y="327.6" width="376.6" height="227.8"/></clipPath>
<clipPath id="cpEd"><rect x="181.1" y="365.5" width="167.6" height="326.5"/></clipPath>
</defs>
<g id="scad" clip-path="url(#cpWin)">
<rect x="181.10" y="309.70" width="664.90" height="382.30" fill="#efeff0" />
<rect x="181.10" y="309.70" width="664.90" height="8.60" fill="url(#gTitle)" />
<text x="499.80" y="315.60" font-size="6.4" fill="#2b2b2b" font-family="DejaVu Sans, sans-serif" text-anchor="middle" font-weight="bold" textLength="95.50" lengthAdjust="spacingAndGlyphs" >autotrace.scad — OpenSCAD</text>
<text x="817.50" y="315.80" font-size="7" fill="#777" font-family="DejaVu Sans, sans-serif" text-anchor="middle" font-weight="normal" >−</text>
<text x="829.00" y="315.90" font-size="7" fill="#777" font-family="DejaVu Sans, sans-serif" text-anchor="middle" font-weight="normal" >+</text>
<text x="840.50" y="315.90" font-size="7" fill="#777" font-family="DejaVu Sans, sans-serif" text-anchor="middle" font-weight="normal" >×</text>
<text x="185.90" y="325.70" font-size="6.4" fill="#2e2e2e" font-family="DejaVu Sans, sans-serif" text-anchor="start" font-weight="normal" textLength="17.50" lengthAdjust="spacingAndGlyphs" >Design</text>
<line x1="185.90" y1="326.50" x2="189.50" y2="326.50" stroke="#333" stroke-width="0.5" />
<text x="208.00" y="325.70" font-size="6.4" fill="#2e2e2e" font-family="DejaVu Sans, sans-serif" text-anchor="start" font-weight="normal" textLength="11.50" lengthAdjust="spacingAndGlyphs" >View</text>
<line x1="208.00" y1="326.50" x2="211.60" y2="326.50" stroke="#333" stroke-width="0.5" />
<text x="225.60" y="325.70" font-size="6.4" fill="#2e2e2e" font-family="DejaVu Sans, sans-serif" text-anchor="start" font-weight="normal" textLength="19.50" lengthAdjust="spacingAndGlyphs" >Window</text>
<line x1="225.60" y1="326.50" x2="229.20" y2="326.50" stroke="#333" stroke-width="0.5" />
<text x="250.80" y="325.70" font-size="6.4" fill="#2e2e2e" font-family="DejaVu Sans, sans-serif" text-anchor="start" font-weight="normal" textLength="10.80" lengthAdjust="spacingAndGlyphs" >Help</text>
<line x1="250.80" y1="326.50" x2="254.40" y2="326.50" stroke="#333" stroke-width="0.5" />
<rect x="337.95" y="329.85" width="4.9" height="4.9" rx="1.1" fill="#b2b2b2"/><path d="M339.20,333.50 L341.60,331.10 M339.40,331.30 L341.40,333.30" stroke="#ececec" stroke-width="0.8" fill="none"/>
<rect x="344.15" y="329.85" width="4.9" height="4.9" rx="1.1" fill="#b2b2b2"/><path d="M345.10,331.00 L346.60,332.90 L348.10,331.00" stroke="#7d7d7d" stroke-width="1.0" fill="none"/>
<rect x="183.70" y="340.50" width="8.00" height="7.00" fill="#222" /><rect x="184.50" y="343.30" width="1.50" height="1.30" fill="#eee" /><rect x="184.50" y="345.50" width="1.50" height="1.30" fill="#eee" /><rect x="186.90" y="343.30" width="1.50" height="1.30" fill="#eee" /><rect x="186.90" y="345.50" width="1.50" height="1.30" fill="#eee" /><rect x="189.30" y="343.30" width="1.50" height="1.30" fill="#eee" /><rect x="189.30" y="345.50" width="1.50" height="1.30" fill="#eee" /><rect x="185.10" y="338.90" width="1.20" height="2.20" fill="#222" /><rect x="189.10" y="338.90" width="1.20" height="2.20" fill="#222" />
<path d="M200.7,344.9 q2,-4 7,-1.5" fill="none" stroke="#333" stroke-width="1.4"/><path d="M199.6,342.29999999999995 l0.6,3.6 l3.2,-1.6z" fill="#333"/>
<path d="M221.7,344.9 q-2,-4 -7,-1.5" fill="none" stroke="#888" stroke-width="1.0"/><path d="M222.79999999999998,342.29999999999995 l-0.6,3.6 l-3.2,-1.6z" fill="#333"/>
<line x1="228.10" y1="340.90" x2="235.60" y2="340.90" stroke="#333" stroke-width="0.9" /><line x1="229.90" y1="342.90" x2="235.60" y2="342.90" stroke="#333" stroke-width="0.9" /><line x1="229.90" y1="344.90" x2="235.60" y2="344.90" stroke="#333" stroke-width="0.9" /><line x1="228.10" y1="346.90" x2="235.60" y2="346.90" stroke="#333" stroke-width="0.9" /><path d="M227.6,342.29999999999995 l2,1.6 l-2,1.6z" fill="#333"/>
<line x1="241.80" y1="340.90" x2="249.30" y2="340.90" stroke="#333" stroke-width="0.9" /><line x1="243.60" y1="342.90" x2="249.30" y2="342.90" stroke="#333" stroke-width="0.9" /><line x1="243.60" y1="344.90" x2="249.30" y2="344.90" stroke="#333" stroke-width="0.9" /><line x1="241.80" y1="346.90" x2="249.30" y2="346.90" stroke="#333" stroke-width="0.9" /><path d="M241.3,342.29999999999995 l2,1.6 l-2,1.6z" fill="#333"/>
<ellipse cx="261.6" cy="343.5" rx="3.5" ry="3.4" fill="#dcdcdf" stroke="#aaa" stroke-width="0.6"/><path d="M260.0,346.5 l1,1 l-1,1 M261.8,346.5 l1,1 l-1,1" fill="none" stroke="#222" stroke-width="0.7"/>
<ellipse cx="275.6" cy="343.9" rx="3.5" ry="3.5" fill="#ececee" stroke="#555" stroke-width="0.7"/><path d="M274.20000000000005,342.09999999999997 h2.8 l-2.8,3.8 h2.8z" fill="none" stroke="#555" stroke-width="0.5"/>
<path d="M288.6,348.09999999999997 v-6.4 l2.4,-2.4 h4.6 v8.8" fill="#f6f6f6" stroke="#666" stroke-width="0.6"/><path d="M287.6,341.5 l3.2,-2.8 v2.8z" fill="#1a1a1a"/><text x="292.10" y="348.20" font-size="3.9" fill="#1a1a1a" font-family="DejaVu Sans, sans-serif" text-anchor="middle" font-weight="bold" textLength="7.40" lengthAdjust="spacingAndGlyphs" >STL</text>
<path d="M302.40000000000003,348.09999999999997 v-6.4 l2.4,-2.4 h4.6 v8.8" fill="#f6f6f6" stroke="#666" stroke-width="0.6"/><path d="M301.40000000000003,341.5 l3.2,-2.8 v2.8z" fill="#1a1a1a"/><text x="305.90" y="348.20" font-size="3.9" fill="#1a1a1a" font-family="DejaVu Sans, sans-serif" text-anchor="middle" font-weight="bold" textLength="7.40" lengthAdjust="spacingAndGlyphs" >SVG</text>
<path d="M316.4,341.9 l3,-1.6 l3,1.6 v4 l-3,1.6 l-3,-1.6z M319.4,338.9 v9.5" fill="none" stroke="#444" stroke-width="0.7"/>
<path d="M181.1,365.5 V353.6 q0,-1 1,-1 H208 q1,0 1,1 V365.5z" fill="#f9f9f9" stroke="#c9c9c9" stroke-width="0.5"/>
<text x="181.40" y="360.60" font-size="5.6" fill="#333" font-family="DejaVu Sans, sans-serif" text-anchor="start" font-weight="normal" textLength="14.60" lengthAdjust="spacingAndGlyphs" >scad*</text>
<rect x="181.10" y="365.50" width="167.60" height="326.50" fill="#ffffff" />
<rect x="348.70" y="365.50" width="1.20" height="326.50" fill="#d8d8da" />
<rect x="181.10" y="365.10" width="168.60" height="0.70" fill="#c8c8cc" />
<g clip-path="url(#cpEd)">
<rect x="181.10" y="406.90" width="167.60" height="8.30" fill="#f4f4f4" />
<text x="171.35" y="380.90" font-size="6.8" font-family="DejaVu Sans Mono, monospace" textLength="83.58" lengthAdjust="spacingAndGlyphs"><tspan fill="#3a3f41">Path_to_PNG_file</tspan><tspan fill="#1c2fb4">=</tspan><tspan fill="#8b1a3a">"/"</tspan><tspan fill="#3a3f41">;</tspan></text>
<text x="171.35" y="389.18" font-size="6.8" font-family="DejaVu Sans Mono, monospace" textLength="67.66" lengthAdjust="spacingAndGlyphs"><tspan fill="#3a3f41">cut_to_svg</tspan><tspan fill="#1c2fb4">=</tspan><tspan fill="#8b1a3a">false</tspan><tspan fill="#3a3f41">;</tspan></text>
<text x="171.35" y="397.46" font-size="6.8" font-family="DejaVu Sans Mono, monospace" textLength="43.78" lengthAdjust="spacingAndGlyphs"><tspan fill="#3a3f41">Fill</tspan><tspan fill="#1c2fb4">=</tspan><tspan fill="#8b1a3a">false</tspan><tspan fill="#3a3f41">;</tspan></text>
<text x="171.35" y="405.74" font-size="6.8" font-family="DejaVu Sans Mono, monospace" textLength="47.76" lengthAdjust="spacingAndGlyphs"><tspan fill="#3a3f41">Invert</tspan><tspan fill="#1c2fb4">=</tspan><tspan fill="#8b1a3a">true</tspan><tspan fill="#3a3f41">;</tspan></text>
<text x="171.35" y="414.02" font-size="6.8" font-family="DejaVu Sans Mono, monospace" textLength="127.36" lengthAdjust="spacingAndGlyphs"><tspan fill="#3a3f41">cut_Z_adjust</tspan><tspan fill="#1c2fb4">=</tspan><tspan fill="#8b1a3a">.11</tspan><tspan fill="#3a3f41">;</tspan><tspan fill="#3a8f8f">//[-10:.001:10]</tspan></text>
<text x="171.35" y="430.58" font-size="6.8" font-family="DejaVu Sans Mono, monospace" textLength="75.62" lengthAdjust="spacingAndGlyphs"><tspan fill="#3c8c3c">module</tspan><tspan fill="#3a3f41"> autotrace(){</tspan></text>
<text x="171.35" y="438.86" font-size="6.8" font-family="DejaVu Sans Mono, monospace" textLength="59.70" lengthAdjust="spacingAndGlyphs"><tspan fill="#1f3fa6">intersection</tspan><tspan fill="#3a3f41">(){</tspan></text>
<text x="171.35" y="447.14" font-size="6.8" font-family="DejaVu Sans Mono, monospace" textLength="115.42" lengthAdjust="spacingAndGlyphs"><tspan fill="#1f3fa6">translate</tspan><tspan fill="#3a3f41">([</tspan><tspan fill="#8b1a3a">0</tspan><tspan fill="#3a3f41">,</tspan><tspan fill="#8b1a3a">0</tspan><tspan fill="#3a3f41">,cut_Z_adjust])</tspan></text>
<text x="171.35" y="455.42" font-size="6.8" font-family="DejaVu Sans Mono, monospace" textLength="67.66" lengthAdjust="spacingAndGlyphs"><tspan fill="#1f3fa6">scale</tspan><tspan fill="#3a3f41">([</tspan><tspan fill="#8b1a3a">1</tspan><tspan fill="#3a3f41">,</tspan><tspan fill="#8b1a3a">1</tspan><tspan fill="#3a3f41">,</tspan><tspan fill="#8b1a3a">.068</tspan><tspan fill="#3a3f41">])</tspan></text>
<text x="171.35" y="463.70" font-size="6.8" font-family="DejaVu Sans Mono, monospace" textLength="155.22" lengthAdjust="spacingAndGlyphs"><tspan fill="#1f3fa6">surface</tspan><tspan fill="#3a3f41">(Path_to_PNG_file,invert</tspan><tspan fill="#1c2fb4">=</tspan><tspan fill="#3a3f41">Invert,</tspan></text>
<text x="171.35" y="471.98" font-size="6.8" font-family="DejaVu Sans Mono, monospace" textLength="67.66" lengthAdjust="spacingAndGlyphs"><tspan fill="#3a3f41">    center</tspan><tspan fill="#1c2fb4">=</tspan><tspan fill="#8b1a3a">true</tspan><tspan fill="#3a3f41">);</tspan></text>
<text x="171.35" y="480.26" font-size="6.8" font-family="DejaVu Sans Mono, monospace" textLength="79.60" lengthAdjust="spacingAndGlyphs"><tspan fill="#1f3fa6">linear_extrude</tspan><tspan fill="#3a3f41">(</tspan><tspan fill="#8b1a3a">1000</tspan><tspan fill="#3a3f41">)</tspan></text>
<text x="171.35" y="488.54" font-size="6.8" font-family="DejaVu Sans Mono, monospace" textLength="99.50" lengthAdjust="spacingAndGlyphs"><tspan fill="#1f3fa6">square</tspan><tspan fill="#3a3f41">(</tspan><tspan fill="#8b1a3a">1000</tspan><tspan fill="#3a3f41">,center</tspan><tspan fill="#1c2fb4">=</tspan><tspan fill="#8b1a3a">true</tspan><tspan fill="#3a3f41">);</tspan></text>
<text x="171.35" y="513.38" font-size="6.8" font-family="DejaVu Sans Mono, monospace" textLength="55.72" lengthAdjust="spacingAndGlyphs"><tspan fill="#3c8c3c">if</tspan><tspan fill="#3a3f41">(cut_to_svg)</tspan></text>
<text x="171.35" y="521.66" font-size="6.8" font-family="DejaVu Sans Mono, monospace" textLength="55.72" lengthAdjust="spacingAndGlyphs"><tspan fill="#1f3fa6">color</tspan><tspan fill="#3a3f41">(</tspan><tspan fill="#8b1a3a">"red"</tspan><tspan fill="#3a3f41">,</tspan><tspan fill="#8b1a3a">3</tspan><tspan fill="#3a3f41">)</tspan></text>
<text x="171.35" y="529.94" font-size="6.8" font-family="DejaVu Sans Mono, monospace" textLength="79.60" lengthAdjust="spacingAndGlyphs"><tspan fill="#2a9a2a">projection</tspan><tspan fill="#3a3f41">(cut</tspan><tspan fill="#1c2fb4">=</tspan><tspan fill="#8b1a3a">true</tspan><tspan fill="#3a3f41">)</tspan></text>
<text x="171.35" y="538.22" font-size="6.8" font-family="DejaVu Sans Mono, monospace" textLength="47.76" lengthAdjust="spacingAndGlyphs"><tspan fill="#3a3f41">autotrace();</tspan></text>
<text x="171.35" y="546.50" font-size="6.8" font-family="DejaVu Sans Mono, monospace" textLength="15.92" lengthAdjust="spacingAndGlyphs"><tspan fill="#2a9a2a">else</tspan></text>
<text x="171.35" y="554.78" font-size="6.8" font-family="DejaVu Sans Mono, monospace" textLength="47.76" lengthAdjust="spacingAndGlyphs"><tspan fill="#3a3f41">autotrace();</tspan></text>
<text x="345.80" y="464.00" font-size="5.2" fill="#444" font-family="DejaVu Sans, sans-serif" text-anchor="middle" font-weight="normal" >↵</text>
</g>
<rect x="352.60" y="327.60" width="376.60" height="227.80" fill="url(#gSky)" />
<g clip-path="url(#cpView)">
<g transform="matrix(0.7545,-0.0389,0.0404,0.7662,348.368,304.930)">
<path d="M212.75,101.29Q213.70,99.30 215.91,99.30L245.08,99.30Q247.30,99.30 248.25,101.31L313.78,240.58Q316.80,247.00 309.71,247.00L280.18,247.00Q278.20,247.00 277.42,245.18L260.36,205.11Q260.20,204.74 259.80,204.74L199.29,204.74Q198.90,204.74 198.74,205.10L180.79,245.22Q180.00,247.00 178.06,247.00L150.33,247.00Q143.20,247.00 146.27,240.56ZM229.35,138.08Q229.80,137.14 230.25,138.08L249.25,177.53Q249.60,178.24 248.80,178.24L210.80,178.24Q210.00,178.24 210.35,177.53ZM230.78,109.87L231.65,116.73L237.90,119.66L231.65,122.60L230.78,129.46L226.05,124.42L219.27,125.72L222.60,119.66L219.27,113.61L226.05,114.91ZM205.78,144.09L206.65,150.94L212.90,153.88L206.65,156.82L205.78,163.68L201.05,158.64L194.27,159.94L197.60,153.88L194.27,147.83L201.05,149.13ZM257.68,144.58L258.55,151.43L264.80,154.37L258.55,157.31L257.68,164.17L252.95,159.13L246.17,160.43L249.50,154.37L246.17,148.32L252.95,149.62ZM191.78,182.52L192.65,189.38L198.90,192.32L192.65,195.26L191.78,202.11L187.05,197.07L180.27,198.37L183.60,192.32L180.27,186.26L187.05,187.56ZM234.08,182.42L234.95,189.28L241.20,192.22L234.95,195.15L234.08,202.01L229.35,196.97L222.57,198.27L225.90,192.22L222.57,186.16L229.35,187.46ZM273.68,181.70L274.55,188.56L280.80,191.50L274.55,194.43L273.68,201.29L268.95,196.25L262.17,197.55L265.50,191.50L262.17,185.44L268.95,186.74ZM171.58,218.51L172.45,225.36L178.70,228.30L172.45,231.24L171.58,238.10L166.85,233.06L160.07,234.36L163.40,228.30L160.07,222.25L166.85,223.55ZM291.08,213.96L291.95,220.81L298.20,223.75L291.95,226.69L291.08,233.55L286.35,228.51L279.57,229.81L282.90,223.75L279.57,217.70L286.35,219.00Z" fill="#08b795" fill-rule="evenodd" stroke="#e8242f" stroke-width="1.3" stroke-linejoin="round"/>
</g>
<line x1="524.70" y1="327.00" x2="530.30" y2="432.50" stroke="#3c3c3c" stroke-width="0.8" />
<line x1="530.30" y1="432.50" x2="536.20" y2="556.00" stroke="#3c3c3c" stroke-width="0.8" stroke-dasharray="0.9 1.3"/>
<line x1="567.00" y1="428.30" x2="729.50" y2="419.10" stroke="#3c3c3c" stroke-width="0.8" />
<line x1="530.00" y1="430.40" x2="567.00" y2="428.30" stroke="#3c3c3c" stroke-width="0.8" stroke-dasharray="3 2.2"/>
<line x1="352.00" y1="437.90" x2="530.00" y2="430.40" stroke="#3c3c3c" stroke-width="0.8" stroke-dasharray="0.9 1.3"/>
<line x1="588.00" y1="427.11" x2="589.00" y2="435.61" stroke="#3c3c3c" stroke-width="0.8" />
<line x1="646.00" y1="423.83" x2="647.00" y2="432.33" stroke="#3c3c3c" stroke-width="0.8" />
<line x1="703.50" y1="420.57" x2="704.50" y2="429.07" stroke="#3c3c3c" stroke-width="0.8" />
<line x1="353.30" y1="437.85" x2="353.60" y2="446.35" stroke="#3c3c3c" stroke-width="0.8" stroke-dasharray="0.9 1.3"/>
<line x1="412.60" y1="435.35" x2="412.90" y2="443.85" stroke="#3c3c3c" stroke-width="0.8" stroke-dasharray="0.9 1.3"/>
<line x1="471.30" y1="432.87" x2="471.60" y2="441.37" stroke="#3c3c3c" stroke-width="0.8" stroke-dasharray="0.9 1.3"/>
<line x1="515.80" y1="331.20" x2="525.00" y2="331.00" stroke="#3c3c3c" stroke-width="0.8" />
<line x1="516.50" y1="372.60" x2="527.00" y2="372.20" stroke="#3c3c3c" stroke-width="0.8" />
<line x1="524.50" y1="462.00" x2="531.50" y2="461.80" stroke="#3c3c3c" stroke-width="0.6" stroke-dasharray="0.8 0.9"/>
<line x1="528.85" y1="468.90" x2="531.85" y2="468.70" stroke="#3c3c3c" stroke-width="0.6" stroke-dasharray="0.8 0.9"/>
<line x1="529.19" y1="475.80" x2="532.19" y2="475.60" stroke="#3c3c3c" stroke-width="0.6" stroke-dasharray="0.8 0.9"/>
<line x1="525.53" y1="482.70" x2="532.53" y2="482.50" stroke="#3c3c3c" stroke-width="0.6" stroke-dasharray="0.8 0.9"/>
<line x1="529.88" y1="489.60" x2="532.88" y2="489.40" stroke="#3c3c3c" stroke-width="0.6" stroke-dasharray="0.8 0.9"/>
<line x1="530.23" y1="496.50" x2="533.23" y2="496.30" stroke="#3c3c3c" stroke-width="0.6" stroke-dasharray="0.8 0.9"/>
<line x1="526.57" y1="503.40" x2="533.57" y2="503.20" stroke="#3c3c3c" stroke-width="0.6" stroke-dasharray="0.8 0.9"/>
<line x1="530.92" y1="510.30" x2="533.92" y2="510.10" stroke="#3c3c3c" stroke-width="0.6" stroke-dasharray="0.8 0.9"/>
<line x1="531.26" y1="517.20" x2="534.26" y2="517.00" stroke="#3c3c3c" stroke-width="0.6" stroke-dasharray="0.8 0.9"/>
<line x1="527.61" y1="524.10" x2="534.61" y2="523.90" stroke="#3c3c3c" stroke-width="0.6" stroke-dasharray="0.8 0.9"/>
<line x1="531.95" y1="531.00" x2="534.95" y2="530.80" stroke="#3c3c3c" stroke-width="0.6" stroke-dasharray="0.8 0.9"/>
<line x1="532.30" y1="537.90" x2="535.30" y2="537.70" stroke="#3c3c3c" stroke-width="0.6" stroke-dasharray="0.8 0.9"/>
<line x1="528.64" y1="544.80" x2="535.64" y2="544.60" stroke="#3c3c3c" stroke-width="0.6" stroke-dasharray="0.8 0.9"/>
<line x1="532.99" y1="551.70" x2="535.99" y2="551.50" stroke="#3c3c3c" stroke-width="0.6" stroke-dasharray="0.8 0.9"/>
<text transform="translate(408.3,434.2) rotate(-2.4)" font-size="13.2" text-anchor="middle" textLength="32.5" lengthAdjust="spacingAndGlyphs" font-family="DejaVu Sans, sans-serif" font-weight="200" fill="#3a3a3a">−200</text>
<text transform="translate(644.8,422.3) rotate(-3.2)" font-size="11.8" text-anchor="middle" textLength="22.2" lengthAdjust="spacingAndGlyphs" font-family="DejaVu Sans, sans-serif" font-weight="200" fill="#3a3a3a">200</text>
<text transform="translate(535.9,333.8) rotate(-87)" font-size="10.4" text-anchor="middle" textLength="11.8" lengthAdjust="spacingAndGlyphs" font-family="DejaVu Sans, sans-serif" font-weight="200" fill="#3a3a3a">20</text>
<text transform="translate(542.6,367.6) rotate(-87)" font-size="10.2" text-anchor="middle" textLength="15.0" lengthAdjust="spacingAndGlyphs" font-family="DejaVu Sans, sans-serif" font-weight="200" fill="#3a3a3a">200</text>
<text transform="translate(549.6,543.0) rotate(-87)" font-size="13" text-anchor="middle" textLength="24.4" lengthAdjust="spacingAndGlyphs" font-family="DejaVu Sans, sans-serif" font-weight="200" fill="#3a3a3a">200</text>
<text transform="translate(539.20,469.5) rotate(-87)" font-size="4.6" text-anchor="middle" textLength="8.0" lengthAdjust="spacingAndGlyphs" font-family="DejaVu Sans, sans-serif" fill="#333">-100</text>
<text transform="translate(540.70,499.5) rotate(-87)" font-size="4.6" text-anchor="middle" textLength="8.0" lengthAdjust="spacingAndGlyphs" font-family="DejaVu Sans, sans-serif" fill="#333">-140</text>
<text transform="translate(541.90,523.5) rotate(-87)" font-size="4.6" text-anchor="middle" textLength="8.0" lengthAdjust="spacingAndGlyphs" font-family="DejaVu Sans, sans-serif" fill="#333">-180</text>
<circle cx="466.5" cy="373.5" r="0.7" fill="#e02020"/>
<circle cx="584.8" cy="367.8" r="0.7" fill="#e02020"/>
<circle cx="591.7" cy="422.9" r="0.7" fill="#e02020"/>
<circle cx="596.6" cy="483.9" r="0.7" fill="#e02020"/>
<circle cx="466.5" cy="490.3" r="0.7" fill="#e02020"/>
<circle cx="466.3" cy="429.5" r="0.7" fill="#e02020"/>
<line x1="390.00" y1="532.30" x2="402.00" y2="532.30" stroke="#e05050" stroke-width="0.7" />
<line x1="390.00" y1="532.30" x2="390.00" y2="522.00" stroke="#30c030" stroke-width="0.7" />
<line x1="390.00" y1="532.30" x2="390.00" y2="526.00" stroke="#4040e0" stroke-width="0.7" />
<text x="404.00" y="533.60" font-size="3.6" fill="#555" font-family="DejaVu Sans, sans-serif" text-anchor="start" font-weight="normal" >x</text>
<text x="388.20" y="519.60" font-size="3.6" fill="#555" font-family="DejaVu Sans, sans-serif" text-anchor="start" font-weight="normal" >y</text>
</g>
<ellipse cx="360.6" cy="563.8" rx="3.3" ry="3.2" fill="none" stroke="#3a3a3a" stroke-width="0.7"/><line x1="360.60" y1="561.70" x2="360.60" y2="566.10" stroke="#3a3a3a" stroke-width="0.6" /><line x1="359.00" y1="568.10" x2="362.20" y2="568.10" stroke="#3a3a3a" stroke-width="0.8" />
<ellipse cx="374.1" cy="563.8" rx="3.3" ry="3.2" fill="none" stroke="#3a3a3a" stroke-width="0.7"/><line x1="374.10" y1="561.70" x2="374.10" y2="566.10" stroke="#3a3a3a" stroke-width="0.6" /><line x1="372.50" y1="568.10" x2="375.70" y2="568.10" stroke="#3a3a3a" stroke-width="0.8" /><line x1="371.90" y1="563.80" x2="376.30" y2="563.80" stroke="#3a3a3a" stroke-width="0.6" />
<rect x="386.7" y="561.3" width="5.2" height="5.4" fill="none" stroke="#3a3a3a" stroke-width="0.8"/><line x1="386.70" y1="561.30" x2="385.10" y2="559.70" stroke="#3a3a3a" stroke-width="0.8" /><line x1="391.90" y1="561.30" x2="393.50" y2="559.70" stroke="#3a3a3a" stroke-width="0.8" /><line x1="386.70" y1="566.70" x2="385.10" y2="568.30" stroke="#3a3a3a" stroke-width="0.8" /><line x1="391.90" y1="566.70" x2="393.50" y2="568.30" stroke="#3a3a3a" stroke-width="0.8" />
<ellipse cx="403.5" cy="563.3" rx="2.7" ry="2.6" fill="none" stroke="#3a3a3a" stroke-width="0.9"/><line x1="405.40" y1="565.30" x2="407.70" y2="568.10" stroke="#3a3a3a" stroke-width="1.2" /><line x1="402.20" y1="563.30" x2="404.80" y2="563.30" stroke="#3a3a3a" stroke-width="0.7" /><line x1="403.50" y1="562.10" x2="403.50" y2="564.50" stroke="#3a3a3a" stroke-width="0.7" />
<ellipse cx="416.29999999999995" cy="563.3" rx="2.7" ry="2.6" fill="none" stroke="#3a3a3a" stroke-width="0.9"/><line x1="418.20" y1="565.30" x2="420.50" y2="568.10" stroke="#3a3a3a" stroke-width="1.2" /><line x1="415.00" y1="563.30" x2="417.60" y2="563.30" stroke="#3a3a3a" stroke-width="0.7" />
<path d="M428.5,562.0999999999999 A3.2,3.2 0 1 1 428.70000000000005,566.5" fill="none" stroke="#3a3a3a" stroke-width="0.8"/><path d="M426.90000000000003,561.6999999999999 l2.6,-0.6 l-0.4,2.6z" fill="#3a3a3a"/>
<rect x="440.70" y="561.10" width="7.20" height="6.60" fill="#222" /><rect x="442.70" y="562.90" width="1.40" height="3.20" fill="#ddd" /><rect x="445.10" y="562.10" width="1.60" height="1.80" fill="#ddd" />
<path d="M455.0,563.6999999999999 l3.8,-2.6 l3.8,2.6 l-3.8,3.8z" fill="#222"/><path d="M457.6,563.5 l1.2,-0.9 l1.2,0.9 l-1.2,1.1z" fill="#ddd"/>
<line x1="472.40" y1="563.10" x2="478.00" y2="564.90" stroke="#3a3a3a" stroke-width="0.8" /><line x1="475.20" y1="560.90" x2="475.20" y2="566.70" stroke="#3a3a3a" stroke-width="0.7" /><line x1="475.20" y1="563.90" x2="473.00" y2="565.90" stroke="#3a3a3a" stroke-width="0.7" /><text x="477.60" y="568.50" font-size="3.6" fill="#222" font-family="DejaVu Sans, sans-serif" text-anchor="start" font-weight="normal" >z</text>
<line x1="485.20" y1="563.10" x2="490.80" y2="564.90" stroke="#3a3a3a" stroke-width="0.8" /><line x1="488.00" y1="560.90" x2="488.00" y2="566.70" stroke="#3a3a3a" stroke-width="0.7" /><line x1="488.00" y1="563.90" x2="485.80" y2="565.90" stroke="#3a3a3a" stroke-width="0.7" /><text x="490.40" y="568.50" font-size="3.6" fill="#222" font-family="DejaVu Sans, sans-serif" text-anchor="start" font-weight="normal" >x</text>
<line x1="500.00" y1="563.10" x2="505.60" y2="564.90" stroke="#3a3a3a" stroke-width="0.8" /><line x1="502.80" y1="560.90" x2="502.80" y2="566.70" stroke="#3a3a3a" stroke-width="0.7" /><line x1="502.80" y1="563.90" x2="500.60" y2="565.90" stroke="#3a3a3a" stroke-width="0.7" /><text x="505.20" y="568.50" font-size="3.6" fill="#222" font-family="DejaVu Sans, sans-serif" text-anchor="start" font-weight="normal" >y</text>
<line x1="512.00" y1="563.10" x2="517.60" y2="564.90" stroke="#3a3a3a" stroke-width="0.8" /><line x1="514.80" y1="560.90" x2="514.80" y2="566.70" stroke="#3a3a3a" stroke-width="0.7" /><line x1="514.80" y1="563.90" x2="512.60" y2="565.90" stroke="#3a3a3a" stroke-width="0.7" /><text x="517.20" y="568.50" font-size="3.6" fill="#222" font-family="DejaVu Sans, sans-serif" text-anchor="start" font-weight="normal" >z</text>
<line x1="527.10" y1="563.10" x2="532.70" y2="564.90" stroke="#3a3a3a" stroke-width="0.8" /><line x1="529.90" y1="560.90" x2="529.90" y2="566.70" stroke="#3a3a3a" stroke-width="0.7" /><line x1="529.90" y1="563.90" x2="527.70" y2="565.90" stroke="#3a3a3a" stroke-width="0.7" /><text x="532.30" y="568.50" font-size="3.6" fill="#222" font-family="DejaVu Sans, sans-serif" text-anchor="start" font-weight="normal" >y</text>
<line x1="540.30" y1="563.10" x2="545.90" y2="564.90" stroke="#3a3a3a" stroke-width="0.8" /><line x1="543.10" y1="560.90" x2="543.10" y2="566.70" stroke="#3a3a3a" stroke-width="0.7" /><line x1="543.10" y1="563.90" x2="540.90" y2="565.90" stroke="#3a3a3a" stroke-width="0.7" /><text x="545.50" y="568.50" font-size="3.6" fill="#222" font-family="DejaVu Sans, sans-serif" text-anchor="start" font-weight="normal" >z</text>
<rect x="552.90" y="558.70" width="12.6" height="11.2" rx="1.2" fill="#d2d2d4" stroke="#b4b4b8" stroke-width="0.5"/><path d="M555.6,567.9 v-4.6 l2.2,-2 h4.8 v4.6 l-2.2,2z M555.6,563.3 h4.8 v4.6 M560.4000000000001,563.3 l2.2,-2" fill="none" stroke="#222" stroke-width="0.8"/><line x1="558.70" y1="565.50" x2="563.60" y2="560.10" stroke="#222" stroke-width="0.9" />
<path d="M570.1,567.9 v-5 l2,-1.8 h5.2 v5 l-2,1.8z M570.1,562.9 h5.2 v5 M575.3000000000001,562.9 l2,-1.8" fill="none" stroke="#333" stroke-width="0.7"/>
<rect x="584.40" y="558.70" width="12.6" height="11.2" rx="1.2" fill="#d2d2d4" stroke="#b4b4b8" stroke-width="0.5"/><line x1="587.30" y1="566.10" x2="590.90" y2="564.70" stroke="#555" stroke-width="0.7" /><line x1="590.90" y1="564.70" x2="594.30" y2="566.10" stroke="#555" stroke-width="0.7" /><line x1="590.90" y1="564.70" x2="590.90" y2="560.50" stroke="#555" stroke-width="0.7" />
<rect x="598.90" y="558.70" width="12.6" height="11.2" rx="1.2" fill="#d2d2d4" stroke="#b4b4b8" stroke-width="0.5"/><line x1="601.80" y1="566.10" x2="605.40" y2="564.70" stroke="#555" stroke-width="0.7" /><line x1="605.40" y1="564.70" x2="608.80" y2="566.10" stroke="#555" stroke-width="0.7" /><line x1="605.40" y1="564.70" x2="605.40" y2="560.50" stroke="#555" stroke-width="0.7" /><text x="606.40" y="568.70" font-size="3.2" fill="#222" font-family="DejaVu Sans, sans-serif" text-anchor="start" font-weight="normal" >10</text>
<rect x="614.1999999999999" y="561.9" width="7.2" height="4.6" fill="none" stroke="#555" stroke-width="0.6" stroke-dasharray="1.2 0.6"/>
<text x="353.60" y="580.40" font-size="5.0" fill="#333" font-family="DejaVu Sans, sans-serif" text-anchor="start" font-weight="normal" textLength="19.00" lengthAdjust="spacingAndGlyphs" >Console</text>
<rect x="717.85" y="575.95" width="4.9" height="4.9" rx="1.1" fill="#b2b2b2"/><path d="M719.10,579.60 L721.50,577.20 M719.30,577.40 L721.30,579.40" stroke="#ececec" stroke-width="0.8" fill="none"/>
<rect x="723.55" y="575.95" width="4.9" height="4.9" rx="1.1" fill="#b2b2b2"/><path d="M724.50,577.10 L726.00,579.00 L727.50,577.10" stroke="#7d7d7d" stroke-width="1.0" fill="none"/>
<rect x="352.60" y="582.40" width="370.70" height="110.00" fill="#fcfcfd" />
<rect x="352.6" y="582.4" width="376.6" height="110" fill="none" stroke="#c4c4c8" stroke-width="0.6"/>
<rect x="723.30" y="582.70" width="5.90" height="109.50" fill="#dedfe3" />
<rect x="723.30" y="582.70" width="0.50" height="109.50" fill="#c9c9cd" />
<rect x="723.80" y="582.90" width="5.20" height="5.60" fill="#fafafa" />
<rect x="723.80" y="687.20" width="5.20" height="4.80" fill="#f4f4f5" />
<path d="M725.1,586.4 l1.3,-1.5 l1.3,1.5z" fill="#333"/>
<text x="354.30" y="589.50" font-size="5.7" fill="#2a2a2a" font-family="DejaVu Sans, sans-serif" text-anchor="start" font-weight="normal" textLength="122.70" lengthAdjust="spacingAndGlyphs" >Geometry cache size in bytes: 1658046920</text>
<text x="354.30" y="598.62" font-size="5.7" fill="#2a2a2a" font-family="DejaVu Sans, sans-serif" text-anchor="start" font-weight="normal" textLength="89.00" lengthAdjust="spacingAndGlyphs" >CGAL Polyhedrons in cache: 93</text>
<text x="354.30" y="607.75" font-size="5.7" fill="#2a2a2a" font-family="DejaVu Sans, sans-serif" text-anchor="start" font-weight="normal" textLength="77.40" lengthAdjust="spacingAndGlyphs" >CGAL cache size in bytes: 0</text>
<text x="354.30" y="616.88" font-size="5.7" fill="#2a2a2a" font-family="DejaVu Sans, sans-serif" text-anchor="start" font-weight="normal" textLength="95.70" lengthAdjust="spacingAndGlyphs" >Total rendering time: 0:00:00.008</text>
<text x="354.30" y="626.00" font-size="5.7" fill="#2a2a2a" font-family="DejaVu Sans, sans-serif" text-anchor="start" font-weight="normal" textLength="87.00" lengthAdjust="spacingAndGlyphs" >Top level object is a 2D object:</text>
<text x="359.20" y="635.12" font-size="5.7" fill="#2a2a2a" font-family="DejaVu Sans, sans-serif" text-anchor="start" font-weight="normal" textLength="28.30" lengthAdjust="spacingAndGlyphs" >Contours:</text>
<text x="399.20" y="635.12" font-size="5.7" fill="#2a2a2a" font-family="DejaVu Sans, sans-serif" text-anchor="start" font-weight="normal" textLength="6.60" lengthAdjust="spacingAndGlyphs" >30</text>
<text x="354.30" y="644.25" font-size="5.7" fill="#2a2a2a" font-family="DejaVu Sans, sans-serif" text-anchor="start" font-weight="normal" textLength="42.00" lengthAdjust="spacingAndGlyphs" >Bounding box:</text>
<text x="359.20" y="653.38" font-size="5.7" fill="#2a2a2a" font-family="DejaVu Sans, sans-serif" text-anchor="start" font-weight="normal" textLength="12.10" lengthAdjust="spacingAndGlyphs" >Min:</text>
<text x="375.00" y="653.38" font-size="5.7" fill="#2a2a2a" font-family="DejaVu Sans, sans-serif" text-anchor="start" font-weight="normal" textLength="46.20" lengthAdjust="spacingAndGlyphs" >-108.50, -108.59</text>
<text x="359.20" y="662.50" font-size="5.7" fill="#2a2a2a" font-family="DejaVu Sans, sans-serif" text-anchor="start" font-weight="normal" textLength="13.80" lengthAdjust="spacingAndGlyphs" >Max:</text>
<text x="376.70" y="662.50" font-size="5.7" fill="#2a2a2a" font-family="DejaVu Sans, sans-serif" text-anchor="start" font-weight="normal" textLength="41.60" lengthAdjust="spacingAndGlyphs" >108.50, 117.58</text>
<text x="359.20" y="671.62" font-size="5.7" fill="#2a2a2a" font-family="DejaVu Sans, sans-serif" text-anchor="start" font-weight="normal" textLength="56.60" lengthAdjust="spacingAndGlyphs" >Size: 217.00, 226.17</text>
<text x="354.30" y="680.75" font-size="5.7" fill="#2a2a2a" font-family="DejaVu Sans, sans-serif" text-anchor="start" font-weight="normal" textLength="44.90" lengthAdjust="spacingAndGlyphs" >Measurements:</text>
<text x="359.20" y="689.88" font-size="5.7" fill="#2a2a2a" font-family="DejaVu Sans, sans-serif" text-anchor="start" font-weight="normal" textLength="43.00" lengthAdjust="spacingAndGlyphs" >Area: 17076.14</text>
<text x="733.80" y="334.00" font-size="5.0" fill="#333" font-family="DejaVu Sans, sans-serif" text-anchor="start" font-weight="normal" textLength="25.80" lengthAdjust="spacingAndGlyphs" >Customizer</text>
<rect x="836.05" y="329.95" width="4.9" height="4.9" rx="1.1" fill="#b2b2b2"/><path d="M837.30,333.60 L839.70,331.20 M837.50,331.40 L839.50,333.40" stroke="#ececec" stroke-width="0.8" fill="none"/>
<rect x="842.05" y="329.95" width="4.9" height="4.9" rx="1.1" fill="#b2b2b2"/><path d="M843.00,331.10 L844.50,333.00 L846.00,331.10" stroke="#7d7d7d" stroke-width="1.0" fill="none"/>
<rect x="733.00" y="340.30" width="4.6" height="4.6" fill="#fdfdfd" stroke="#bbb" stroke-width="0.5"/><path d="M734.20,343.70 l1.0,1.3 l1.9,-3.3" fill="none" stroke="#222" stroke-width="1.1"/>
<text x="740.00" y="344.70" font-size="5.0" fill="#333" font-family="DejaVu Sans, sans-serif" text-anchor="start" font-weight="normal" textLength="42.60" lengthAdjust="spacingAndGlyphs" >Automatic Preview</text>
<rect x="789.80" y="337.80" width="55.50" height="10.60" rx="1" fill="#f7f7f8" stroke="#c2c2c6" stroke-width="0.6"/>
<text x="791.80" y="344.90" font-size="5.0" fill="#333" font-family="DejaVu Sans, sans-serif" text-anchor="start" font-weight="normal" textLength="29.60" lengthAdjust="spacingAndGlyphs" >Show Details</text>
<path d="M839.6,342.4 l1.5,1.8 l1.5,-1.8z" fill="#444"/>
<rect x="732.50" y="350.30" width="76.50" height="9.50" rx="1" fill="#fdfdfd" stroke="#c2c2c6" stroke-width="0.6"/>
<line x1="801.40" y1="350.60" x2="801.40" y2="359.50" stroke="#c8c8cc" stroke-width="0.5" />
<text x="733.80" y="357.00" font-size="5.0" fill="#333" font-family="DejaVu Sans, sans-serif" text-anchor="start" font-weight="normal" textLength="22.40" lengthAdjust="spacingAndGlyphs" >New set 4</text>
<path d="M803.6,354.2 l1.5,1.8 l1.5,-1.8z" fill="#444"/>
<rect x="811.50" y="350.30" width="16.10" height="9.50" rx="1" fill="#f7f7f8" stroke="#c2c2c6" stroke-width="0.6"/>
<text x="819.50" y="356.90" font-size="5" fill="#333" font-family="DejaVu Sans, sans-serif" text-anchor="middle" font-weight="normal" >+</text>
<rect x="829.50" y="350.30" width="16.00" height="9.50" rx="1" fill="#f7f7f8" stroke="#c2c2c6" stroke-width="0.6"/>
<text x="837.50" y="356.60" font-size="5" fill="#333" font-family="DejaVu Sans, sans-serif" text-anchor="middle" font-weight="normal" >-</text>
<rect x="732.50" y="362.60" width="113.00" height="10.80" rx="1" fill="#d6d6d8" stroke="#bdbdc0" stroke-width="0.6"/>
<path d="M735.4,367.0 l1.4,1.8 l1.4,-1.8z" fill="#444"/>
<text x="741.00" y="370.50" font-size="5.9" fill="#333" font-family="DejaVu Sans, sans-serif" text-anchor="start" font-weight="normal" textLength="33.40" lengthAdjust="spacingAndGlyphs" >Parameters</text>
<text x="733.80" y="381.20" font-size="5.6" fill="#1e1e1e" font-family="DejaVu Sans, sans-serif" text-anchor="start" font-weight="bold" textLength="48.60" lengthAdjust="spacingAndGlyphs" >Path to PNG file</text>
<rect x="733.00" y="383.90" width="110.50" height="11.40" rx="1" fill="#fdfdfd" stroke="#c2c2c6" stroke-width="0.6"/>
<text x="734.40" y="391.70" font-size="5.8" fill="#2a2a2a" font-family="DejaVu Sans, sans-serif" text-anchor="start" font-weight="normal" textLength="107.60" lengthAdjust="spacingAndGlyphs" >one4/Desktop/2025-05-24_08-18.png</text>
<text x="733.80" y="402.80" font-size="5.6" fill="#1e1e1e" font-family="DejaVu Sans, sans-serif" text-anchor="start" font-weight="bold" textLength="30.20" lengthAdjust="spacingAndGlyphs" >cut to svg</text>
<rect x="836.60" y="396.80" width="6.6" height="6.6" fill="#fdfdfd" stroke="#bbb" stroke-width="0.5"/><path d="M837.80,400.20 l1.7,2.0 l2.6,-4.6" fill="none" stroke="#222" stroke-width="1.1"/>
<text x="733.80" y="411.60" font-size="5.6" fill="#1e1e1e" font-family="DejaVu Sans, sans-serif" text-anchor="start" font-weight="bold" textLength="9.20" lengthAdjust="spacingAndGlyphs" >Fill</text>
<rect x="836.60" y="405.90" width="6.6" height="6.6" fill="#fdfdfd" stroke="#bbb" stroke-width="0.5"/>
<text x="733.80" y="420.90" font-size="5.6" fill="#1e1e1e" font-family="DejaVu Sans, sans-serif" text-anchor="start" font-weight="bold" textLength="19.00" lengthAdjust="spacingAndGlyphs" >Invert</text>
<rect x="836.60" y="415.00" width="6.6" height="6.6" fill="#fdfdfd" stroke="#bbb" stroke-width="0.5"/><path d="M837.80,418.40 l1.7,2.0 l2.6,-4.6" fill="none" stroke="#222" stroke-width="1.1"/>
<text x="733.80" y="431.80" font-size="5.6" fill="#1e1e1e" font-family="DejaVu Sans, sans-serif" text-anchor="start" font-weight="bold" textLength="36.00" lengthAdjust="spacingAndGlyphs" >cut Z adjust</text>
<rect x="789.70" y="423.60" width="53.80" height="11.00" rx="1" fill="#fdfdfd" stroke="#c2c2c6" stroke-width="0.6"/>
<text x="835.30" y="431.60" font-size="5.6" fill="#2a2a2a" font-family="DejaVu Sans, sans-serif" text-anchor="end" font-weight="normal" textLength="15.60" lengthAdjust="spacingAndGlyphs" >1.474</text>
<path d="M839.4,428.0 l1.3,-1.8 l1.3,1.8z M839.4,430.4 l1.3,1.8 l1.3,-1.8z" fill="#444"/>
<rect x="733.7" y="439.4" width="109.8" height="1.3" rx="0.6" fill="#c9c9cc"/>
<rect x="733.7" y="439.2" width="62.6" height="1.6" rx="0.7" fill="#3b8fd6"/>
<circle cx="796.6" cy="440.0" r="2.3" fill="#fafafa" stroke="#aaa" stroke-width="0.6"/>
<line x1="374.80" y1="396.30" x2="285.43" y2="352.22" stroke="#8a1a24" stroke-width="1.25" />
<path d="M278.70,348.90 L288.81,349.87 L285.79,352.39 L285.63,356.33Z" fill="#8a1a24"/>
</g>
<g id="grid" fill="#fff" fill-opacity="0.30" shape-rendering="crispEdges">
<rect x="6" y="2" width="1" height="724"/>
<rect x="21" y="2" width="1" height="724"/>
<rect x="36" y="2" width="1" height="724"/>
<rect x="51" y="2" width="1" height="724"/>
<rect x="67" y="2" width="1" height="724"/>
<rect x="82" y="2" width="1" height="724"/>
<rect x="97" y="2" width="1" height="724"/>
<rect x="112" y="2" width="1" height="724"/>
<rect x="127" y="2" width="1" height="724"/>
<rect x="142" y="2" width="1" height="724"/>
<rect x="157" y="2" width="1" height="724"/>
<rect x="172" y="2" width="1" height="724"/>
<rect x="187" y="2" width="1" height="724"/>
<rect x="203" y="2" width="1" height="724"/>
<rect x="218" y="2" width="1" height="724"/>
<rect x="233" y="2" width="1" height="724"/>
<rect x="248" y="2" width="1" height="724"/>
<rect x="263" y="2" width="1" height="724"/>
<rect x="278" y="2" width="1" height="724"/>
<rect x="293" y="2" width="1" height="724"/>
<rect x="308" y="2" width="1" height="724"/>
<rect x="323" y="2" width="1" height="724"/>
<rect x="339" y="2" width="1" height="724"/>
<rect x="354" y="2" width="1" height="724"/>
<rect x="369" y="2" width="1" height="724"/>
<rect x="384" y="2" width="1" height="724"/>
<rect x="399" y="2" width="1" height="724"/>
<rect x="414" y="2" width="1" height="724"/>
<rect x="429" y="2" width="1" height="724"/>
<rect x="444" y="2" width="1" height="724"/>
<rect x="459" y="2" width="1" height="724"/>
<rect x="475" y="2" width="1" height="724"/>
<rect x="490" y="2" width="1" height="724"/>
<rect x="505" y="2" width="1" height="724"/>
<rect x="520" y="2" width="1" height="724"/>
<rect x="535" y="2" width="1" height="724"/>
<rect x="550" y="2" width="1" height="724"/>
<rect x="565" y="2" width="1" height="724"/>
<rect x="580" y="2" width="1" height="724"/>
<rect x="595" y="2" width="1" height="724"/>
<rect x="611" y="2" width="1" height="724"/>
<rect x="626" y="2" width="1" height="724"/>
<rect x="641" y="2" width="1" height="724"/>
<rect x="656" y="2" width="1" height="724"/>
<rect x="671" y="2" width="1" height="724"/>
<rect x="686" y="2" width="1" height="724"/>
<rect x="701" y="2" width="1" height="724"/>
<rect x="716" y="2" width="1" height="724"/>
<rect x="731" y="2" width="1" height="724"/>
<rect x="746" y="2" width="1" height="724"/>
<rect x="762" y="2" width="1" height="724"/>
<rect x="777" y="2" width="1" height="724"/>
<rect x="792" y="2" width="1" height="724"/>
<rect x="807" y="2" width="1" height="724"/>
<rect x="822" y="2" width="1" height="724"/>
<rect x="837" y="2" width="1" height="724"/>
<rect x="852" y="2" width="1" height="724"/>
<rect x="867" y="2" width="1" height="724"/>
<rect x="0" y="7" width="870" height="1"/>
<rect x="0" y="22" width="870" height="1"/>
<rect x="0" y="37" width="870" height="1"/>
<rect x="0" y="52" width="870" height="1"/>
<rect x="0" y="67" width="870" height="1"/>
<rect x="0" y="82" width="870" height="1"/>
<rect x="0" y="97" width="870" height="1"/>
<rect x="0" y="112" width="870" height="1"/>
<rect x="0" y="128" width="870" height="1"/>
<rect x="0" y="143" width="870" height="1"/>
<rect x="0" y="158" width="870" height="1"/>
<rect x="0" y="173" width="870" height="1"/>
<rect x="0" y="188" width="870" height="1"/>
<rect x="0" y="203" width="870" height="1"/>
<rect x="0" y="218" width="870" height="1"/>
<rect x="0" y="233" width="870" height="1"/>
<rect x="0" y="248" width="870" height="1"/>
<rect x="0" y="264" width="870" height="1"/>
<rect x="0" y="279" width="870" height="1"/>
<rect x="0" y="294" width="870" height="1"/>
<rect x="0" y="309" width="870" height="1"/>
<rect x="0" y="324" width="870" height="1"/>
<rect x="0" y="339" width="870" height="1"/>
<rect x="0" y="354" width="870" height="1"/>
<rect x="0" y="369" width="870" height="1"/>
<rect x="0" y="384" width="870" height="1"/>
<rect x="0" y="400" width="870" height="1"/>
<rect x="0" y="415" width="870" height="1"/>
<rect x="0" y="430" width="870" height="1"/>
<rect x="0" y="445" width="870" height="1"/>
<rect x="0" y="460" width="870" height="1"/>
<rect x="0" y="475" width="870" height="1"/>
<rect x="0" y="490" width="870" height="1"/>
<rect x="0" y="505" width="870" height="1"/>
<rect x="0" y="520" width="870" height="1"/>
<rect x="0" y="536" width="870" height="1"/>
<rect x="0" y="551" width="870" height="1"/>
<rect x="0" y="566" width="870" height="1"/>
<rect x="0" y="581" width="870" height="1"/>
<rect x="0" y="596" width="870" height="1"/>
<rect x="0" y="611" width="870" height="1"/>
<rect x="0" y="626" width="870" height="1"/>
<rect x="0" y="641" width="870" height="1"/>
<rect x="0" y="656" width="870" height="1"/>
<rect x="0" y="672" width="870" height="1"/>
<rect x="0" y="687" width="870" height="1"/>
<rect x="0" y="702" width="870" height="1"/>
<rect x="0" y="717" width="870" height="1"/>
</g>
<g id="sel">
<path d="M181.1,342.5 H14.5 V26.5 H457.5 V309.7" fill="none" stroke="#ebe6d2" stroke-width="1"/>
<path d="M181.1,342.5 H14.5 V26.5 H457.5 V309.7" fill="none" stroke="#0a0a9c" stroke-width="1" stroke-dasharray="4 4" stroke-dashoffset="2.6"/>
<path d="M181.1,342.5 H457.5 V309.7" fill="none" stroke="#2424d2" stroke-width="1" stroke-dasharray="4 4" stroke-dashoffset="1"/>
<g transform="translate(236.0,18.2) rotate(90)"><path d="M-4.5,0 L-1.1,-3 V-1.1 H1.1 V-3 L4.5,0 L1.1,3 V1.1 H-1.1 V3 Z" fill="#fff" stroke="#fff" stroke-width="1.9" stroke-opacity="0.7" stroke-linejoin="round"/><path d="M-4.5,0 L-1.1,-3 V-1.1 H1.1 V-3 L4.5,0 L1.1,3 V1.1 H-1.1 V3 Z" fill="#000"/></g>
<g transform="translate(236.0,351.3) rotate(90)"><path d="M-4.5,0 L-1.1,-3 V-1.1 H1.1 V-3 L4.5,0 L1.1,3 V1.1 H-1.1 V3 Z" fill="#fff" stroke="#fff" stroke-width="1.9" stroke-opacity="0.7" stroke-linejoin="round"/><path d="M-4.5,0 L-1.1,-3 V-1.1 H1.1 V-3 L4.5,0 L1.1,3 V1.1 H-1.1 V3 Z" fill="#000"/></g>
<g transform="translate(6.9,184.8) rotate(0)"><path d="M-4.5,0 L-1.1,-3 V-1.1 H1.1 V-3 L4.5,0 L1.1,3 V1.1 H-1.1 V3 Z" fill="#fff" stroke="#fff" stroke-width="1.9" stroke-opacity="0.7" stroke-linejoin="round"/><path d="M-4.5,0 L-1.1,-3 V-1.1 H1.1 V-3 L4.5,0 L1.1,3 V1.1 H-1.1 V3 Z" fill="#000"/></g>
<g transform="translate(465.0,184.8) rotate(0)"><path d="M-4.5,0 L-1.1,-3 V-1.1 H1.1 V-3 L4.5,0 L1.1,3 V1.1 H-1.1 V3 Z" fill="#fff" stroke="#fff" stroke-width="1.9" stroke-opacity="0.7" stroke-linejoin="round"/><path d="M-4.5,0 L-1.1,-3 V-1.1 H1.1 V-3 L4.5,0 L1.1,3 V1.1 H-1.1 V3 Z" fill="#000"/></g>
<g transform="translate(9.0,20.9) scale(-1,1)"><path d="M3.2,-3.2 H-1.4 L-0.2,-2.0 L-2.0,-0.2 L-3.2,-1.4 V3.2 H1.4 L0.2,2.0 L2.0,0.2 L3.2,1.4 Z" fill="#fff" stroke="#fff" stroke-width="1.6" stroke-opacity="0.55" stroke-linejoin="round"/><circle cx="-2.3" cy="-2.3" r="1.2" fill="#fff" fill-opacity="0.75"/><circle cx="2.3" cy="2.3" r="1.2" fill="#fff" fill-opacity="0.75"/><circle cx="-2.3" cy="-2.3" r="0.45" fill="#2a5be0"/><circle cx="2.3" cy="2.3" r="0.45" fill="#2a5be0"/><path d="M3.2,-3.2 H-1.4 L-0.2,-2.0 L-2.0,-0.2 L-3.2,-1.4 V3.2 H1.4 L0.2,2.0 L2.0,0.2 L3.2,1.4 Z" fill="#000"/></g>
<g transform="translate(463.0,21.0) scale(1,1)"><path d="M3.2,-3.2 H-1.4 L-0.2,-2.0 L-2.0,-0.2 L-3.2,-1.4 V3.2 H1.4 L0.2,2.0 L2.0,0.2 L3.2,1.4 Z" fill="#fff" stroke="#fff" stroke-width="1.6" stroke-opacity="0.55" stroke-linejoin="round"/><circle cx="-2.3" cy="-2.3" r="1.2" fill="#fff" fill-opacity="0.75"/><circle cx="2.3" cy="2.3" r="1.2" fill="#fff" fill-opacity="0.75"/><circle cx="-2.3" cy="-2.3" r="0.45" fill="#2a5be0"/><circle cx="2.3" cy="2.3" r="0.45" fill="#2a5be0"/><path d="M3.2,-3.2 H-1.4 L-0.2,-2.0 L-2.0,-0.2 L-3.2,-1.4 V3.2 H1.4 L0.2,2.0 L2.0,0.2 L3.2,1.4 Z" fill="#000"/></g>
<g transform="translate(8.8,347.8) scale(1,1)"><path d="M3.2,-3.2 H-1.4 L-0.2,-2.0 L-2.0,-0.2 L-3.2,-1.4 V3.2 H1.4 L0.2,2.0 L2.0,0.2 L3.2,1.4 Z" fill="#fff" stroke="#fff" stroke-width="1.6" stroke-opacity="0.55" stroke-linejoin="round"/><circle cx="-2.3" cy="-2.3" r="1.2" fill="#fff" fill-opacity="0.75"/><circle cx="2.3" cy="2.3" r="1.2" fill="#fff" fill-opacity="0.75"/><circle cx="-2.3" cy="-2.3" r="0.45" fill="#2a5be0"/><circle cx="2.3" cy="2.3" r="0.45" fill="#2a5be0"/><path d="M3.2,-3.2 H-1.4 L-0.2,-2.0 L-2.0,-0.2 L-3.2,-1.4 V3.2 H1.4 L0.2,2.0 L2.0,0.2 L3.2,1.4 Z" fill="#000"/></g>
<g transform="translate(463.0,348.0) scale(-1,1)"><path d="M3.2,-3.2 H-1.4 L-0.2,-2.0 L-2.0,-0.2 L-3.2,-1.4 V3.2 H1.4 L0.2,2.0 L2.0,0.2 L3.2,1.4 Z" fill="#fff" stroke="#fff" stroke-width="1.6" stroke-opacity="0.55" stroke-linejoin="round"/><circle cx="-2.3" cy="-2.3" r="1.2" fill="#fff" fill-opacity="0.75"/><circle cx="2.3" cy="2.3" r="1.2" fill="#fff" fill-opacity="0.75"/><circle cx="-2.3" cy="-2.3" r="0.45" fill="#2a5be0"/><circle cx="2.3" cy="2.3" r="0.45" fill="#2a5be0"/><path d="M3.2,-3.2 H-1.4 L-0.2,-2.0 L-2.0,-0.2 L-3.2,-1.4 V3.2 H1.4 L0.2,2.0 L2.0,0.2 L3.2,1.4 Z" fill="#000"/></g>
</g>
<defs><linearGradient id="gTrough" x1="0" y1="0" x2="0" y2="1"><stop offset="0" stop-color="#cfcfcf"/><stop offset="1" stop-color="#f0f0f0"/></linearGradient>
<linearGradient id="gThumb" x1="0" y1="0" x2="0" y2="1"><stop offset="0" stop-color="#f2f2f2"/><stop offset="1" stop-color="#dadada"/></linearGradient></defs>
<g id="chrome">
<rect x="0.00" y="0.00" width="368.00" height="1.10" fill="#cfcfcf" />
<rect x="368.00" y="0.00" width="502.00" height="1.10" fill="#fafafa" />
<rect x="0.00" y="1.00" width="870.00" height="0.80" fill="#4a4a4a" />
<rect x="-0.65" y="0.00" width="1.00" height="1.60" fill="#333" />
<rect x="8.80" y="0.00" width="1.00" height="1.60" fill="#333" />
<rect x="18.26" y="0.00" width="1.00" height="1.60" fill="#333" />
<rect x="27.71" y="0.00" width="1.00" height="1.60" fill="#333" />
<rect x="37.17" y="0.00" width="1.00" height="1.60" fill="#333" />
<rect x="46.62" y="0.00" width="1.00" height="1.60" fill="#333" />
<rect x="56.07" y="0.00" width="1.00" height="1.60" fill="#333" />
<rect x="65.53" y="0.00" width="1.00" height="1.60" fill="#333" />
<rect x="74.98" y="0.00" width="1.00" height="1.60" fill="#333" />
<rect x="84.44" y="0.00" width="1.00" height="1.60" fill="#333" />
<rect x="93.89" y="0.00" width="1.00" height="1.60" fill="#333" />
<rect x="103.34" y="0.00" width="1.00" height="1.60" fill="#333" />
<rect x="112.80" y="0.00" width="1.00" height="1.60" fill="#333" />
<rect x="122.25" y="0.00" width="1.00" height="1.60" fill="#333" />
<rect x="131.71" y="0.00" width="1.00" height="1.60" fill="#333" />
<rect x="141.16" y="0.00" width="1.00" height="1.60" fill="#333" />
<rect x="150.61" y="0.00" width="1.00" height="1.60" fill="#333" />
<rect x="160.07" y="0.00" width="1.00" height="1.60" fill="#333" />
<rect x="169.52" y="0.00" width="1.00" height="1.60" fill="#333" />
<rect x="178.98" y="0.00" width="1.00" height="1.60" fill="#333" />
<rect x="188.43" y="0.00" width="1.00" height="1.60" fill="#333" />
<rect x="197.88" y="0.00" width="1.00" height="1.60" fill="#333" />
<rect x="207.34" y="0.00" width="1.00" height="1.60" fill="#333" />
<rect x="216.79" y="0.00" width="1.00" height="1.60" fill="#333" />
<rect x="226.25" y="0.00" width="1.00" height="1.60" fill="#333" />
<rect x="235.70" y="0.00" width="1.00" height="1.60" fill="#333" />
<rect x="245.15" y="0.00" width="1.00" height="1.60" fill="#333" />
<rect x="254.61" y="0.00" width="1.00" height="1.60" fill="#333" />
<rect x="264.06" y="0.00" width="1.00" height="1.60" fill="#333" />
<rect x="273.52" y="0.00" width="1.00" height="1.60" fill="#333" />
<rect x="282.97" y="0.00" width="1.00" height="1.60" fill="#333" />
<rect x="292.42" y="0.00" width="1.00" height="1.60" fill="#333" />
<rect x="301.88" y="0.00" width="1.00" height="1.60" fill="#333" />
<rect x="311.33" y="0.00" width="1.00" height="1.60" fill="#333" />
<rect x="320.79" y="0.00" width="1.00" height="1.60" fill="#333" />
<rect x="330.24" y="0.00" width="1.00" height="1.60" fill="#333" />
<rect x="339.69" y="0.00" width="1.00" height="1.60" fill="#333" />
<rect x="349.15" y="0.00" width="1.00" height="1.60" fill="#333" />
<rect x="358.60" y="0.00" width="1.00" height="1.60" fill="#333" />
<rect x="368.06" y="0.00" width="1.00" height="1.60" fill="#333" />
<rect x="377.51" y="0.00" width="1.00" height="1.60" fill="#333" />
<rect x="386.96" y="0.00" width="1.00" height="1.60" fill="#333" />
<rect x="396.42" y="0.00" width="1.00" height="1.60" fill="#333" />
<rect x="405.87" y="0.00" width="1.00" height="1.60" fill="#333" />
<rect x="415.33" y="0.00" width="1.00" height="1.60" fill="#333" />
<rect x="424.78" y="0.00" width="1.00" height="1.60" fill="#333" />
<rect x="434.23" y="0.00" width="1.00" height="1.60" fill="#333" />
<rect x="443.69" y="0.00" width="1.00" height="1.60" fill="#333" />
<rect x="453.14" y="0.00" width="1.00" height="1.60" fill="#333" />
<rect x="462.60" y="0.00" width="1.00" height="1.60" fill="#333" />
<rect x="472.05" y="0.00" width="1.00" height="1.60" fill="#333" />
<rect x="481.50" y="0.00" width="1.00" height="1.60" fill="#333" />
<rect x="490.96" y="0.00" width="1.00" height="1.60" fill="#333" />
<rect x="500.41" y="0.00" width="1.00" height="1.60" fill="#333" />
<rect x="509.87" y="0.00" width="1.00" height="1.60" fill="#333" />
<rect x="519.32" y="0.00" width="1.00" height="1.60" fill="#333" />
<rect x="528.77" y="0.00" width="1.00" height="1.60" fill="#333" />
<rect x="538.23" y="0.00" width="1.00" height="1.60" fill="#333" />
<rect x="547.68" y="0.00" width="1.00" height="1.60" fill="#333" />
<rect x="557.14" y="0.00" width="1.00" height="1.60" fill="#333" />
<rect x="566.59" y="0.00" width="1.00" height="1.60" fill="#333" />
<rect x="576.04" y="0.00" width="1.00" height="1.60" fill="#333" />
<rect x="585.50" y="0.00" width="1.00" height="1.60" fill="#333" />
<rect x="594.95" y="0.00" width="1.00" height="1.60" fill="#333" />
<rect x="604.41" y="0.00" width="1.00" height="1.60" fill="#333" />
<rect x="613.86" y="0.00" width="1.00" height="1.60" fill="#333" />
<rect x="623.31" y="0.00" width="1.00" height="1.60" fill="#333" />
<rect x="632.77" y="0.00" width="1.00" height="1.60" fill="#333" />
<rect x="642.22" y="0.00" width="1.00" height="1.60" fill="#333" />
<rect x="651.68" y="0.00" width="1.00" height="1.60" fill="#333" />
<rect x="661.13" y="0.00" width="1.00" height="1.60" fill="#333" />
<rect x="670.58" y="0.00" width="1.00" height="1.60" fill="#333" />
<rect x="680.04" y="0.00" width="1.00" height="1.60" fill="#333" />
<rect x="689.49" y="0.00" width="1.00" height="1.60" fill="#333" />
<rect x="698.95" y="0.00" width="1.00" height="1.60" fill="#333" />
<rect x="708.40" y="0.00" width="1.00" height="1.60" fill="#333" />
<rect x="717.85" y="0.00" width="1.00" height="1.60" fill="#333" />
<rect x="727.31" y="0.00" width="1.00" height="1.60" fill="#333" />
<rect x="736.76" y="0.00" width="1.00" height="1.60" fill="#333" />
<rect x="746.22" y="0.00" width="1.00" height="1.60" fill="#333" />
<rect x="755.67" y="0.00" width="1.00" height="1.60" fill="#333" />
<rect x="765.12" y="0.00" width="1.00" height="1.60" fill="#333" />
<rect x="774.58" y="0.00" width="1.00" height="1.60" fill="#333" />
<rect x="784.03" y="0.00" width="1.00" height="1.60" fill="#333" />
<rect x="793.49" y="0.00" width="1.00" height="1.60" fill="#333" />
<rect x="802.94" y="0.00" width="1.00" height="1.60" fill="#333" />
<rect x="812.39" y="0.00" width="1.00" height="1.60" fill="#333" />
<rect x="821.85" y="0.00" width="1.00" height="1.60" fill="#333" />
<rect x="831.30" y="0.00" width="1.00" height="1.60" fill="#333" />
<rect x="840.76" y="0.00" width="1.00" height="1.60" fill="#333" />
<rect x="850.21" y="0.00" width="1.00" height="1.60" fill="#333" />
<rect x="859.66" y="0.00" width="1.00" height="1.60" fill="#333" />
<rect x="869.12" y="0.00" width="1.00" height="1.60" fill="#333" />
<rect x="0.00" y="726.00" width="870.00" height="15.00" fill="url(#gTrough)" />
<rect x="0.00" y="725.80" width="870.00" height="0.90" fill="#9c9c9c" />
<rect x="-10" y="731.6" width="762.4" height="20" rx="5.5" fill="url(#gThumb)" stroke="#7c7c7c" stroke-width="0.9"/>
</g>
</svg>
</body></html>
